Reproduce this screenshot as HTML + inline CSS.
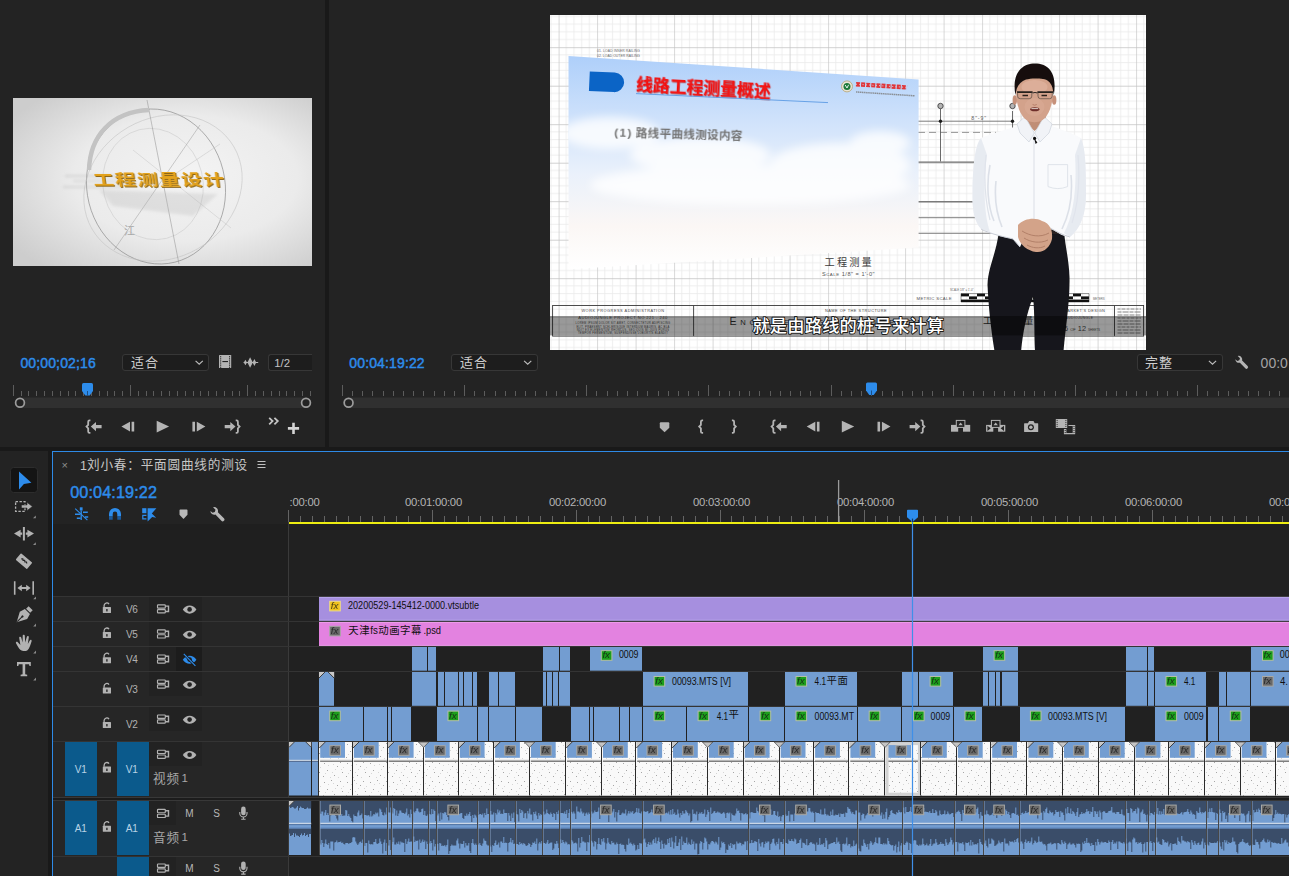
<!DOCTYPE html>
<html lang="zh"><head><meta charset="utf-8"><title>Adobe Premiere Pro</title>
<style>
html,body{margin:0;padding:0;background:#232323}
body{width:1289px;height:876px;overflow:hidden;position:relative;font-family:"Liberation Sans",sans-serif;}
.a{position:absolute;display:block}
.t{white-space:nowrap;line-height:1}
svg{overflow:visible}
</style></head><body>
<div class="a" style="left:325px;top:0px;width:4px;height:447px;background:#191919;"></div>
<div class="a" style="left:0px;top:447px;width:1289px;height:4px;background:#191919;"></div>
<div class="a" style="left:48px;top:451px;width:4px;height:425px;background:#191919;"></div>
<div class="a" style="left:52px;top:451px;width:1237px;height:1px;background:#2e8ae6;"></div>
<div class="a" style="left:52px;top:451px;width:1px;height:425px;background:#2e8ae6;"></div>
<svg class="a" style="left:13px;top:98px" width="299" height="168" viewBox="0 0 299 168" role="img" aria-label="source preview"><defs><radialGradient id="pvg" cx="0.56" cy="0.5" r="0.68" fx="0.6" fy="0.45"><stop offset="0" stop-color="#f3f3f3"/><stop offset="0.55" stop-color="#ebebeb"/><stop offset="1" stop-color="#cdcdcd"/></radialGradient><filter id="bl1"><feGaussianBlur stdDeviation="0.6"/></filter><filter id="bl2"><feGaussianBlur stdDeviation="1.6"/></filter></defs><rect width="299" height="168" fill="url(#pvg)"/><g fill="none" stroke="#8a8a8a" stroke-width="0.5" filter="url(#bl1)"><ellipse cx="143" cy="88.5" rx="69" ry="78" transform="rotate(-14 143 88.5)" stroke="#858585" stroke-width="0.6"/><ellipse cx="150" cy="90" rx="82" ry="70" transform="rotate(-30 150 90)" stroke="#c0c0c0"/><ellipse cx="140" cy="86" rx="50" ry="56" transform="rotate(-14 140 86)" stroke="#c8c8c8"/><path d="M134 2 L166 166" stroke="#8c8c8c"/><path d="M187 27 L101 152" stroke="#9a9a9a"/><path d="M120 52 L218 130" stroke="#c4c4c4"/><path d="M207 46 L150 84" stroke="#c0c0c0"/></g><path d="M76 72 C 77 38, 98 14, 136 12" fill="none" stroke="#c3c3c3" stroke-width="4.5" filter="url(#bl1)"/><g filter="url(#bl2)" opacity="0.28"><rect x="52" y="77" width="60" height="2" fill="#9a9a9a"/><rect x="60" y="82" width="50" height="2" fill="#a8a8a8"/><rect x="50" y="88" width="60" height="2" fill="#a0a0a0"/><path d="M86 92 L205 96 L180 118 L100 108 Z" fill="#b4b4b4"/></g><g transform="translate(80 75) skewX(8) scale(1 0.72)" fill="#8a6414" filter="url(#bl1)"><text x="0" y="18.5" font-family="'Liberation Sans','Noto Sans CJK SC',sans-serif" font-size="21" font-weight="bold" letter-spacing="1">工程测量设计</text></g><g transform="translate(79 74) skewX(8) scale(1 0.72)" fill="#e3a21d" filter="url(#bl1)"><text x="0" y="18.5" font-family="'Liberation Sans','Noto Sans CJK SC',sans-serif" font-size="21" font-weight="bold" letter-spacing="1">工程测量设计</text></g><text x="111" y="136.7" font-family="'Liberation Sans','Noto Sans CJK SC',sans-serif" font-size="11" fill="#a8a8a8">江</text></svg>
<div class="a" style="left:122px;top:354px;width:85px;height:15px;background:#1d1d1d;border:1px solid #373737;border-radius:3px"></div>
<div class="a" style="left:450.6px;top:354px;width:85px;height:15px;background:#1d1d1d;border:1px solid #373737;border-radius:3px"></div>
<div class="a" style="left:1136.5px;top:354px;width:84px;height:15px;background:#1d1d1d;border:1px solid #373737;border-radius:3px"></div>
<div class="a" style="left:267.5px;top:354px;width:50px;height:15px;background:#1d1d1d;border:1px solid #373737;border-radius:3px 0 0 3px;border-right:none;width:43.5px"></div>
<svg class="a" style="left:0px;top:0px" width="1289" height="876" viewBox="0 0 1289 876" role="img" aria-label="controls"><path d="M13.5 385 V396M21.5 391 V396M28.5 391 V396M36.5 391 V396M44.5 391 V396M52.5 391 V396M60.5 391 V396M68.5 391 V396M75.5 391 V396M83.5 391 V396M91.5 391 V396M99.5 391 V396M107.5 391 V396M114.5 391 V396M122.5 391 V396M130.5 385 V396M138.5 391 V396M146.5 391 V396M153.5 391 V396M161.5 391 V396M169.5 391 V396M177.5 391 V396M185.5 391 V396M193.5 391 V396M200.5 391 V396M208.5 391 V396M216.5 391 V396M224.5 391 V396M232.5 391 V396M239.5 391 V396M247.5 385 V396M255.5 391 V396M263.5 391 V396M271.5 391 V396M279.5 391 V396M286.5 391 V396M294.5 391 V396M302.5 391 V396M310.5 391 V396" stroke="#5c5c5c" stroke-width="1" fill="none"/><rect x="15" y="397.5" width="296" height="10.5" rx="5" fill="#303030"/><circle cx="20" cy="402.8" r="4.4" fill="#232323" stroke="#9c9c9c" stroke-width="1.7"/><circle cx="306" cy="402.8" r="4.4" fill="#232323" stroke="#9c9c9c" stroke-width="1.7"/><path d="M83.5 383 h8 a1.5 1.5 0 0 1 1.5 1.5 V391 L89.7 395.5 H85.3 L82 391 V384.5 a1.5 1.5 0 0 1 1.5 -1.5Z" fill="#2d8ceb"/><path d="M87.5 391 V396" stroke="#1b4f88" stroke-width="1"/><path d="M342.5 385 V396M352.5 391 V396M362.5 391 V396M372.5 391 V396M383.5 391 V396M393.5 391 V396M403.5 391 V396M413.5 391 V396M423.5 391 V396M434.5 391 V396M444.5 391 V396M454.5 391 V396M464.5 385 V396M474.5 391 V396M484.5 391 V396M495.5 391 V396M505.5 391 V396M515.5 391 V396M525.5 391 V396M535.5 391 V396M546.5 391 V396M556.5 391 V396M566.5 391 V396M576.5 391 V396M586.5 385 V396M596.5 391 V396M607.5 391 V396M617.5 391 V396M627.5 391 V396M637.5 391 V396M647.5 391 V396M658.5 391 V396M668.5 391 V396M678.5 391 V396M688.5 391 V396M698.5 391 V396M708.5 385 V396M719.5 391 V396M729.5 391 V396M739.5 391 V396M749.5 391 V396M759.5 391 V396M770.5 391 V396M780.5 391 V396M790.5 391 V396M800.5 391 V396M810.5 391 V396M820.5 391 V396M831.5 385 V396M841.5 391 V396M851.5 391 V396M861.5 391 V396M871.5 391 V396M882.5 391 V396M892.5 391 V396M902.5 391 V396M912.5 391 V396M922.5 391 V396M932.5 391 V396M943.5 391 V396M953.5 385 V396M963.5 391 V396M973.5 391 V396M983.5 391 V396M994.5 391 V396M1004.5 391 V396M1014.5 391 V396M1024.5 391 V396M1034.5 391 V396M1044.5 391 V396M1055.5 391 V396M1065.5 391 V396M1075.5 385 V396M1085.5 391 V396M1095.5 391 V396M1106.5 391 V396M1116.5 391 V396M1126.5 391 V396M1136.5 391 V396M1146.5 391 V396M1157.5 391 V396M1167.5 391 V396M1177.5 391 V396M1187.5 391 V396M1197.5 385 V396M1207.5 391 V396M1218.5 391 V396M1228.5 391 V396M1238.5 391 V396M1248.5 391 V396M1258.5 391 V396M1269.5 391 V396M1279.5 391 V396" stroke="#5c5c5c" stroke-width="1" fill="none"/><rect x="343" y="397.5" width="960" height="10.5" rx="5" fill="#303030"/><circle cx="348.6" cy="402.8" r="4.4" fill="#232323" stroke="#9c9c9c" stroke-width="1.7"/><path d="M867.5 382.5 h8 a1.5 1.5 0 0 1 1.5 1.5 V390.5 L873.7 395 H869.3 L866 390.5 V384 a1.5 1.5 0 0 1 1.5 -1.5Z" fill="#2d8ceb"/><path d="M871.5 390.5 V395.5" stroke="#1b4f88" stroke-width="1"/><path d="M90.4 420.4 h-.8 q-1.400 0 -1.400 1.400 v3 l-1.700 1.800 l1.700 1.800 v3 q0 1.400 1.400 1.400 h.8" fill="none" stroke="#b4b4b4" stroke-width="1.800" stroke-linejoin="miter"/><path d="M90.8 426.6 l5.2 -4.6 v3 h5.6 v3.2 h-5.6 v3z" fill="#b4b4b4"/><path d="M121.4 426.6 l8.6 -4.9 v9.8z M131.6 421.7 h2.6 v9.8 h-2.6z" fill="#b4b4b4"/><path d="M156.7 420.8 l12.4 5.8 l-12.4 5.8z" fill="#b4b4b4"/><path d="M205.4 426.6 l-8.6 -4.9 v9.8z M192.4 421.7 h2.6 v9.8 h-2.6z" fill="#b4b4b4"/><path d="M235.7 420.4 h.8 q1.400 0 1.400 1.400 v3 l1.700 1.800 l-1.700 1.800 v3 q0 1.400 -1.400 1.400 h-.8" fill="none" stroke="#b4b4b4" stroke-width="1.800" stroke-linejoin="miter"/><path d="M235.5 426.6 l-5.2 -4.6 v3 h-5.6 v3.2 h5.6 v3z" fill="#b4b4b4"/><path d="M269.2 417.8 l3.4 3.3 l-3.4 3.3 M274.4 417.8 l3.4 3.3 l-3.4 3.3" fill="none" stroke="#c4c4c4" stroke-width="1.8"/><path d="M293.5 422.8 v11.2 M287.9 428.4 h11.2" stroke="#d4d4d4" stroke-width="2.6"/><path d="M660.8 422.2 h7.5 a1 1 0 0 1 1 1 v4.6 l-4.75 4.4 l-4.75 -4.4 v-4.6 a1 1 0 0 1 1 -1z" fill="#b4b4b4"/><path d="M703.1 420.4 h-.8 q-1.400 0 -1.400 1.400 v3 l-1.700 1.800 l1.700 1.800 v3 q0 1.400 1.400 1.400 h.8" fill="none" stroke="#b4b4b4" stroke-width="1.800" stroke-linejoin="miter"/><path d="M731.9 420.4 h.8 q1.400 0 1.400 1.400 v3 l1.700 1.800 l-1.700 1.800 v3 q0 1.400 -1.400 1.400 h-.8" fill="none" stroke="#b4b4b4" stroke-width="1.800" stroke-linejoin="miter"/><path d="M775.5 420.4 h-.8 q-1.400 0 -1.400 1.400 v3 l-1.700 1.800 l1.700 1.800 v3 q0 1.400 1.400 1.400 h.8" fill="none" stroke="#b4b4b4" stroke-width="1.800" stroke-linejoin="miter"/><path d="M775.9 426.6 l5.2 -4.6 v3 h5.6 v3.2 h-5.6 v3z" fill="#b4b4b4"/><path d="M806.7 426.6 l8.6 -4.9 v9.8z M816.9 421.7 h2.6 v9.8 h-2.6z" fill="#b4b4b4"/><path d="M841.8 420.8 l12.4 5.8 l-12.4 5.8z" fill="#b4b4b4"/><path d="M890.5 426.6 l-8.6 -4.9 v9.8z M877.5 421.7 h2.6 v9.8 h-2.6z" fill="#b4b4b4"/><path d="M920.6 420.4 h.8 q1.400 0 1.400 1.400 v3 l1.700 1.800 l-1.700 1.800 v3 q0 1.400 -1.400 1.400 h-.8" fill="none" stroke="#b4b4b4" stroke-width="1.800" stroke-linejoin="miter"/><path d="M920.4 426.6 l-5.2 -4.6 v3 h-5.6 v3.2 h5.6 v3z" fill="#b4b4b4"/><rect x="951" y="424.9" width="7.2" height="6.8" fill="#b4b4b4"/><rect x="963" y="424.9" width="7.2" height="6.8" fill="#b4b4b4"/><rect x="956.3" y="420.4" width="8.6" height="7" fill="#232323" stroke="#b4b4b4" stroke-width="1"/><path d="M958.4 425.2 l2.200 -2.700 l2.200 2.700z" fill="#b4b4b4"/><rect x="986.1" y="424.9" width="7.2" height="6.8" fill="#b4b4b4"/><rect x="998.1" y="424.9" width="7.2" height="6.8" fill="#b4b4b4"/><rect x="991.4" y="420.4" width="8.6" height="7" fill="#232323" stroke="#b4b4b4" stroke-width="1"/><path d="M993.5 425.2 l2.200 -2.700 l2.200 2.700z" fill="#b4b4b4"/><path d="M987.4 425.700 l3.400 2.600 l-3.400 2.600z M1004 425.700 l-3.400 2.600 l3.400 2.600z" fill="#232323"/><path d="M1024.600 423.300 h3.300 l1.200 -2.200 h4.400 l1.200 2.200 h3 a.5 .5 0 0 1 .5 .5 v7.600 a.5 .5 0 0 1 -.5 .5 h-13.100 a.5 .5 0 0 1 -.5 -.5 v-7.600 a.5 .5 0 0 1 .5 -.5z" fill="#b4b4b4"/><circle cx="1030.900" cy="427.200" r="3" fill="#232323"/><circle cx="1030.900" cy="427.200" r="1.700" fill="#b4b4b4"/><rect x="1055.800" y="419" width="11.400" height="9" rx="0.500" fill="#b4b4b4"/><g fill="#232323"><rect x="1056.600" y="419.9" width="1" height="1"/><rect x="1065.400" y="419.9" width="1" height="1"/><rect x="1056.600" y="421.9" width="1" height="1"/><rect x="1065.400" y="421.9" width="1" height="1"/><rect x="1056.600" y="423.9" width="1" height="1"/><rect x="1065.400" y="423.9" width="1" height="1"/><rect x="1056.600" y="425.9" width="1" height="1"/><rect x="1065.400" y="425.9" width="1" height="1"/></g><path d="M1068.400 425.500 h6.100 v8.100 h-10 v-4.600" fill="none" stroke="#b4b4b4" stroke-width="1.200"/><path d="M1064 429 h2.400 v5.100 h-2.400z M1072.700 425 h2.400 v9.100 h-2.400z" fill="#b4b4b4"/><g fill="#232323"><rect x="1064.700" y="430" width="1" height="1"/><rect x="1073.500" y="426" width="1" height="1"/><rect x="1064.700" y="432" width="1" height="1"/><rect x="1073.500" y="428" width="1" height="1"/><rect x="1073.500" y="430" width="1" height="1"/><rect x="1073.500" y="432" width="1" height="1"/></g><g transform="translate(1241.5 362.5) scale(1)"><path d="M-6.2 -3.2 a3.6 3.6 0 0 0 4.6 3.4 l5.4 5.6 a1.6 1.6 0 0 0 2.3 -2.3 l-5.5 -5.5 a3.6 3.6 0 0 0 -4.4 -4.5 l2.3 2.3 l-0.7 2 l-2 0.7z" fill="#b4b4b4"/></g><rect x="219" y="355" width="12.2" height="13.1" rx="0.6" fill="#b4b4b4"/><g fill="#232323"><rect x="220.1" y="356.2" width="1.1" height="1.1"/><rect x="229" y="356.2" width="1.1" height="1.1"/><rect x="220.1" y="358.3" width="1.1" height="1.1"/><rect x="229" y="358.3" width="1.1" height="1.1"/><rect x="220.1" y="360.4" width="1.1" height="1.1"/><rect x="229" y="360.4" width="1.1" height="1.1"/><rect x="220.1" y="362.5" width="1.1" height="1.1"/><rect x="229" y="362.5" width="1.1" height="1.1"/><rect x="220.1" y="364.6" width="1.1" height="1.1"/><rect x="229" y="364.6" width="1.1" height="1.1"/><rect x="220.1" y="366.7" width="1.1" height="1.1"/><rect x="229" y="366.7" width="1.1" height="1.1"/><rect x="222.4" y="361" width="5.6" height="1.1"/></g><path d="M243.6 362.5 H258.2" stroke="#b4b4b4" stroke-width="1"/><path d="M243.8 362.5 l1.600 -2.800 l1.600 2.800 l-1.600 2.800z M247.400 362.500 l2.700 -5.300 l2.700 5.300 l-2.700 5.300z M252.600 362.500 l1.800 -3.400 l1.800 3.400 l-1.800 3.400z" fill="#b4b4b4"/><path d="M195.6 360.8 l3.6 3.4 l3.6 -3.4" fill="none" stroke="#bcbcbc" stroke-width="1.15"/><path d="M524.1 360.8 l3.6 3.4 l3.6 -3.4" fill="none" stroke="#bcbcbc" stroke-width="1.15"/><path d="M1208.9 360.8 l3.6 3.4 l3.6 -3.4" fill="none" stroke="#bcbcbc" stroke-width="1.15"/></svg>
<div class="a t" style="left:274.2px;top:357.6px;font-size:11.4px;color:#c2c2c2;">1/2</div>
<svg class="a" style="left:128.5px;top:354.3px" width="32" height="20" viewBox="0 0 32 20" role="img" aria-label="适合"><text x="2" y="13.4" font-family="'Liberation Sans','Noto Sans CJK SC',sans-serif" font-size="13" letter-spacing="1" fill="#cfcfcf">适合</text></svg>
<svg class="a" style="left:457.6px;top:354.3px" width="32" height="20" viewBox="0 0 32 20" role="img" aria-label="适合"><text x="2" y="13.4" font-family="'Liberation Sans','Noto Sans CJK SC',sans-serif" font-size="13" letter-spacing="1" fill="#cfcfcf">适合</text></svg>
<svg class="a" style="left:1142.8px;top:354.3px" width="32" height="20" viewBox="0 0 32 20" role="img" aria-label="完整"><text x="2" y="13.4" font-family="'Liberation Sans','Noto Sans CJK SC',sans-serif" font-size="13" letter-spacing="1" fill="#cfcfcf">完整</text></svg>
<div class="a t" style="left:20.4px;top:356px;font-size:14px;color:#2d8ceb;letter-spacing:0.14px;-webkit-text-stroke:0.45px #2d8ceb">00;00;02;16</div>
<div class="a t" style="left:349.3px;top:356px;font-size:14px;color:#2d8ceb;letter-spacing:0.14px;-webkit-text-stroke:0.45px #2d8ceb">00:04:19:22</div>
<div class="a t" style="left:1260.6px;top:356px;font-size:14px;color:#a4a4a4;">00:0</div>
<svg class="a" style="left:550px;top:15px" width="596" height="335" viewBox="0 0 596 335" role="img" aria-label="program video frame"><defs>
<pattern id="grid" x="8.6" y="-6.3" width="38.5" height="38.5" patternUnits="userSpaceOnUse">
<path d="M7.7 0V38.5M15.4 0V38.5M23.1 0V38.5M30.8 0V38.5M0 7.7H38.5M0 15.4H38.5M0 23.1H38.5M0 30.8H38.5" stroke="#eaeaea" stroke-width="0.8" fill="none"/>
<path d="M0 0V38.5M0 0H38.5" stroke="#c2c2c2" stroke-width="1.25" fill="none"/>
</pattern>
<linearGradient id="sky" x1="0" y1="0" x2="0" y2="1"><stop offset="0" stop-color="#aecffa"/><stop offset="0.3" stop-color="#cfe2fb"/><stop offset="0.55" stop-color="#eaf1fb"/><stop offset="0.8" stop-color="#fbf7f5"/><stop offset="1" stop-color="#ffffff"/></linearGradient>
<filter id="vb1"><feGaussianBlur stdDeviation="0.5"/></filter>
<filter id="vb4"><feGaussianBlur stdDeviation="5"/></filter>
<clipPath id="slideclip"><path d="M18.5 40.9 L368.6 64.5 L368.6 232.5 L18.5 254.3Z"/></clipPath>
<clipPath id="vclip"><rect width="596" height="335"/></clipPath>
</defs><g clip-path="url(#vclip)"><rect width="596" height="335" fill="#fff"/><rect width="596" height="335" fill="url(#grid)"/><g font-family="Liberation Sans" font-size="3.4" fill="#666"><text x="47" y="37.4" textLength="43">01. LOAD INNER RAILING</text><text x="47" y="42.2" textLength="43">02. LOAD OUTER RAILING</text></g><g stroke="#6e6e6e" fill="none" stroke-width="0.9"><path d="M368 106.200H463"/><path d="M368 117.400H446" stroke-dasharray="7 4" stroke="#8a8a8a"/><path d="M390.500 93.500V146.500M462.500 96V120" stroke="#5a5a5a"/><path d="M368 147.200H432" stroke-width="1.200"/><path d="M368 186.800H428" stroke-width="1.400" stroke="#7a7a7a"/><path d="M368 202.700H530" stroke="#707070"/><path d="M368 218.300H444" stroke="#707070"/><path d="M524 198 v6 h4" stroke="#444"/><circle cx="390.500" cy="91" r="2.700" stroke="#444" fill="#b4b4b4"/><circle cx="462.500" cy="91" r="2.700" stroke="#444" fill="#b4b4b4"/></g><circle cx="390.500" cy="106.200" r="1.700" fill="#1c1c1c"/><circle cx="462.500" cy="106.200" r="1.700" fill="#1c1c1c"/><text x="429.200" y="104.600" font-family="Liberation Sans" font-size="5.200" fill="#606060" text-anchor="middle" letter-spacing="0.900">8"-9"</text><path d="M18.5 40.9 L368.6 64.5 L368.6 232.5 L18.5 254.3Z" fill="url(#sky)"/><g clip-path="url(#slideclip)" filter="url(#vb4)" fill="#fff" opacity="0.8"><ellipse cx="60" cy="118" rx="50" ry="16"/><ellipse cx="150" cy="140" rx="70" ry="18"/><ellipse cx="290" cy="150" rx="70" ry="22"/><ellipse cx="330" cy="128" rx="30" ry="12"/><ellipse cx="200" cy="170" rx="160" ry="20"/></g><path d="M0 0 H25 a9.8 9.8 0 0 1 0 19.6 H0Z" transform="translate(39.8 56.4) rotate(2.6)" fill="#0b64c6"/><g transform="translate(86.6 60.4) rotate(3.1)" filter="url(#vb1)"><g transform="translate(0.7 0.9)" fill="#8e1010" opacity="0.5"><text x="0" y="14.9" font-family="'Liberation Sans','Noto Sans CJK SC',sans-serif" font-size="16.9" font-weight="bold" letter-spacing="-0.05">线路工程测量概述</text></g><g fill="#f31212" stroke="#f31212" stroke-width="0.2"><text x="0" y="14.9" font-family="'Liberation Sans','Noto Sans CJK SC',sans-serif" font-size="16.9" font-weight="bold" letter-spacing="-0.05">线路工程测量概述</text></g></g><path d="M86 78.6 L278 87.6" stroke="#5c9be3" stroke-width="0.9"/><g transform="translate(64.5 111.5) rotate(1.6)" fill="#737373" filter="url(#vb1)"><text x="0" y="10.2" font-family="'Liberation Sans','Noto Sans CJK SC',sans-serif" font-size="11.6" font-weight="bold"><tspan x="0" textLength="17" lengthAdjust="spacing">(1)</tspan><tspan x="21.48" letter-spacing="0.3">路线平曲线测设内容</tspan></text></g><circle cx="297" cy="71.4" r="5.5" fill="#e9e5d6" stroke="#b9aa80" stroke-width="0.9"/><circle cx="297" cy="71.400" r="3.500" fill="#1d7a3a"/><path d="M295.200 70 l1.800 3 l1.600 -3.200" stroke="#fff" stroke-width="0.9" fill="none"/><path d="M306 69.200 L357 72.400" stroke="#e32424" stroke-width="4.400" fill="none" stroke-dasharray="4 1.100" opacity="0.9"/><path d="M306 69.200 L357 72.400" stroke="#cfe0f7" stroke-width="1" fill="none" stroke-dasharray="1 2.300" opacity="0.9"/><path d="M306 77 L365 80.800" stroke="#7d7d7d" stroke-width="1.500" stroke-dasharray="1.400 0.500" opacity="0.8"/><text x="274.6" y="251.2" font-family="'Liberation Sans','Noto Sans CJK SC',sans-serif" font-size="10.2" letter-spacing="2.1" fill="#3c3c3c">工程测量</text><text x="298.5" y="260.8" font-family="Liberation Sans" font-size="5.600" fill="#555" text-anchor="middle" letter-spacing="0.500">S<tspan font-size="4.400">CALE</tspan> 1/8" = 1'-0"</text><text x="366.5" y="284.6" font-family="Liberation Sans" font-size="4.3" fill="#555" letter-spacing="0.3">METRIC SCALE</text><text x="400" y="276.4" font-family="Liberation Sans" font-size="2.8" fill="#666">SCALE 1/8" = 1'-0"</text><g fill="#111"><rect x="411" y="278.6" width="8" height="2.8"/><rect x="419" y="281.4" width="8" height="2.8"/><rect x="427" y="278.6" width="8" height="2.8"/><rect x="435" y="281.4" width="8" height="2.8"/><rect x="443" y="278.6" width="8" height="2.8"/><rect x="451" y="281.4" width="8" height="2.8"/><rect x="459" y="278.6" width="8" height="2.8"/><rect x="467" y="281.4" width="8" height="2.8"/><rect x="475" y="278.6" width="8" height="2.8"/><rect x="483" y="281.4" width="8" height="2.8"/><rect x="491" y="278.6" width="8" height="2.8"/><rect x="499" y="281.4" width="8" height="2.8"/><rect x="507" y="278.6" width="8" height="2.8"/><rect x="515" y="281.4" width="8" height="2.8"/><rect x="523" y="278.6" width="8" height="2.8"/><rect x="531" y="281.4" width="8" height="2.8"/></g><path d="M411 278.6 H539 V287 H411Z" fill="none" stroke="#333" stroke-width="0.5"/><rect x="411" y="284.6" width="128" height="2.4" fill="#111"/><text x="543" y="284.6" font-family="Liberation Sans" font-size="2.8" fill="#666">METERS</text><g fill="none" stroke="#3a3a3a" stroke-width="0.9"><rect x="2.6" y="290.5" width="591" height="30.6"/><path d="M143.6 290.5V321.1M564.5 290.5V321.1"/></g><text x="73" y="297" font-family="Liberation Sans" fill="#4a4a4a" font-size="3.9" text-anchor="middle" letter-spacing="0.5">WORK PROGRESS ADMINISTRATION</text><text x="73" y="303.6" font-family="Liberation Sans" fill="#4a4a4a" font-size="4.1" text-anchor="middle" letter-spacing="0.45">AUDIOJUNGLE PROJECT NO 221 - 240</text><text x="73" y="309.4" font-family="Liberation Sans" fill="#4a4a4a" font-size="2.7" text-anchor="middle" letter-spacing="0.3">LOREM IPSUM DOLOR SIT AMET, CONSECTETUR ADIPISCING</text><text x="73" y="312.5" font-family="Liberation Sans" fill="#4a4a4a" font-size="2.7" text-anchor="middle" letter-spacing="0.3">ELIT. PRAESENT SCELERISQUE INTERDUM MAURIS, AC BLA</text><text x="73" y="315.6" font-family="Liberation Sans" fill="#4a4a4a" font-size="2.7" text-anchor="middle" letter-spacing="0.3">NDIT EX ELEMENTUM RHONCUS. SED QUIS MI QUIS PURUS</text><text x="73" y="318.7" font-family="Liberation Sans" fill="#4a4a4a" font-size="2.7" text-anchor="middle" letter-spacing="0.3">TEMPOR FERMENTUM. SUSPENDISSE LOBORTIS BLANDIT</text><text x="306" y="297" font-family="Liberation Sans" fill="#4a4a4a" font-size="3.9" text-anchor="middle" letter-spacing="0.5">NAME OF THE STRUCTURE</text><text x="179.5" y="309.6" font-family="Liberation Sans" fill="#333" font-size="10.6" letter-spacing="3.6">E<tspan font-size="7.6" letter-spacing="3.9">NGINEERING MEASUREMENT</tspan></text><text x="433" y="309.05" font-family="'Liberation Sans','Noto Sans CJK SC',sans-serif" font-size="9.6" letter-spacing="3.9" fill="#333">工程测量</text><text x="534.5" y="297" font-family="Liberation Sans" fill="#4a4a4a" font-size="3.9" text-anchor="middle" letter-spacing="0.4">MARKET'S DESIGN</text><text x="529.5" y="303.6" font-family="Liberation Sans" fill="#4a4a4a" font-size="3.3" text-anchor="middle" letter-spacing="0.4">AUDIOJUNGLE</text><text x="514" y="315.6" font-family="Liberation Sans" fill="#4a4a4a" font-size="7.4">6 <tspan font-size="4">OF</tspan> 12 <tspan font-size="3">SHEETS</tspan></text><path d="M567.5 294 H591" stroke="#777" stroke-width="0.9" stroke-dasharray="3 1 4 1"/><path d="M567.5 297 H591" stroke="#777" stroke-width="0.9" stroke-dasharray="4 1 6 1"/><path d="M567.5 300 H591" stroke="#777" stroke-width="0.9" stroke-dasharray="5 1 5 1"/><path d="M567.5 303 H591" stroke="#777" stroke-width="0.9" stroke-dasharray="3 1 4 1"/><path d="M567.5 306 H591" stroke="#777" stroke-width="0.9" stroke-dasharray="4 1 6 1"/><path d="M567.5 309 H591" stroke="#777" stroke-width="0.9" stroke-dasharray="5 1 5 1"/><path d="M567.5 312 H591" stroke="#777" stroke-width="0.9" stroke-dasharray="3 1 4 1"/><path d="M567.5 315 H591" stroke="#777" stroke-width="0.9" stroke-dasharray="4 1 6 1"/><path d="M567.5 318 H591" stroke="#777" stroke-width="0.9" stroke-dasharray="5 1 5 1"/><g filter="url(#vb1)"><path d="M449 216 C446 240 438 252 437.5 270 C439 300 442 320 444.5 336 L471 336 C473 318 476 300 483 282 C485 300 484 320 485 336 L513.5 336 C516 310 520 285 519.5 262 C519 245 515 230 514 216Z" fill="#15161a"/><path d="M449 214.5 H515 V219 H449Z" fill="#2a2422"/><path d="M473 109 C462 113 444 118 431 123 C425 130 423 150 422.5 175 C422 195 424 206 431 214 C440 220 455 222 463 224 L470 232 C475 222 480 214 486 212 L500 213 C508 218 514 222 520 222 C530 214 536 200 536 180 C536 155 536 135 531 123 C520 117 506 113 497 109 L485 118Z" fill="#f9fafc"/><path d="M431 214 C440 219 455 222 463 224 L470 232 M520 222 C512 220 506 216 500 213" fill="none" stroke="#c9cdd6" stroke-width="1"/><path d="M436 140 C434 160 435 185 440 205 M528 140 C530 165 528 190 522 208 M484 120 V212" fill="none" stroke="#dfe3ea" stroke-width="1.2"/><path d="M468 210 C474 203 486 202 492 206 C500 208 503 216 502 224 C500 232 494 238 486 237 C478 236 470 230 468 222Z" fill="#d3a389"/><path d="M472 216 C480 221 490 223 499 218 M474 223 C480 227 490 229 498 225 M477 230 C482 233 490 234 495 231" stroke="#ae7c64" stroke-width="0.9" fill="none"/><path d="M431 123 C425 130 423 150 422.500 175 C422 195 424 206 431 214 L440 217 C434 200 433 170 437 140Z M531 123 C536 135 536 155 536 180 C536 200 530 214 520 222 L514 218 C524 200 527 170 525 140Z" fill="#dfe4ec" opacity="0.7"/><path d="M498 149.600 h19.600 v22 q-9.800 4 -19.600 0z" fill="none" stroke="#dde1e8" stroke-width="0.9"/><path d="M446 166 C444 185 447 200 452 212 M521 160 C523 182 519 200 512 214 M440 150 C436 170 438 192 444 206" fill="none" stroke="#d4d9e2" stroke-width="1.600" opacity="0.8"/><path d="M474 96 H496 V106 L484.500 116 L474 106Z" fill="#c08e76"/><path d="M467 109 L475 101.500 L484.300 118 L479 127 L470 118Z M502 109 L494 101.500 L484.700 118 L490 127 L499 118Z" fill="#f1f3f7" stroke="#cfd4dc" stroke-width="0.7"/><ellipse cx="464.800" cy="85" rx="2.200" ry="4.800" fill="#c6917a"/><ellipse cx="504.200" cy="85" rx="2.200" ry="4.800" fill="#c6917a"/><path d="M466 76 C466 60 474 51 484.500 51 C495 51 503 60 503 76 C503 90 498.500 101 492.500 105 C488 108 481 108 476.500 105 C470.500 101 466 90 466 76Z" fill="#d3a28b"/><ellipse cx="484.500" cy="72" rx="13" ry="7" fill="#deb29c" opacity="0.8"/><ellipse cx="484.500" cy="92" rx="10" ry="9" fill="#d9aa94" opacity="0.7"/><path d="M465.400 80 C461.500 58 472 48.400 485 48.400 C498.500 48.400 507.500 58 503.800 80 L502.400 72.500 C500.500 67 497.500 64.600 493 64 C488 63.200 480 63.200 476 64.600 C471.500 66.200 468.600 69.500 466.800 73.500Z" fill="#15110e"/><g fill="none" stroke="#27211d"><path d="M467 77.200 H482.600 M487.400 77.200 H503" stroke-width="1.700"/><path d="M467.600 77.500 v3.600 q0 2.600 2.600 2.600 h9 q2.600 0 2.600 -2.600 v-3.600 M488 77.500 v3.600 q0 2.600 2.600 2.600 h9 q2.600 0 2.600 -2.600 v-3.600" stroke-width="0.7" stroke="#5a4c44"/><path d="M482.600 78 q2.400 -1 4.800 0" stroke-width="1"/></g><path d="M472.500 80.500 h5.500 M491.500 80.500 h5.500" stroke="#2c211c" stroke-width="1.400"/><path d="M482.600 89.500 q2 1.400 4.200 0" stroke="#b37a64" stroke-width="0.9" fill="none"/><ellipse cx="484.800" cy="94.200" rx="4.600" ry="2" fill="#6e2f2b"/><path d="M481.400 93.600 h6.800" stroke="#e8dcd6" stroke-width="0.9"/><path d="M484 123 l1.600 6 l1.800 -1.400z" fill="#111"/><circle cx="484.600" cy="123.400" r="1.600" fill="#111"/></g><rect x="0" y="301" width="596" height="19.4" fill="#000" opacity="0.4"/><g transform="translate(202.4 301.6)"><g fill="#000" stroke="#111" stroke-width="2.06" stroke-linejoin="round" opacity="0.9"><text x="0" y="15.1" font-family="'Liberation Sans','Noto Sans CJK SC',sans-serif" font-size="17.2" font-weight="500" letter-spacing="0.25">就是由路线的桩号来计算</text></g><g fill="#fff"><text x="0" y="15.1" font-family="'Liberation Sans','Noto Sans CJK SC',sans-serif" font-size="17.2" font-weight="500" letter-spacing="0.25">就是由路线的桩号来计算</text></g></g></g></svg>
<div class="a" style="left:53px;top:452px;width:1236px;height:72px;background:#232323;"></div>
<div class="a" style="left:53px;top:524px;width:236px;height:72px;background:#1f1f1f;"></div>
<div class="a" style="left:289px;top:524px;width:1000px;height:352px;background:#212121;"></div>
<div class="a" style="left:53px;top:596px;width:236px;height:280px;background:#262626;"></div>
<div class="a" style="left:288px;top:510px;width:1px;height:366px;background:#3a3a3a;"></div>
<div class="a" style="left:149px;top:597px;width:53px;height:24px;background:#222222;"></div>
<div class="a" style="left:149px;top:622px;width:53px;height:24px;background:#222222;"></div>
<div class="a" style="left:149px;top:647px;width:53px;height:24px;background:#222222;"></div>
<div class="a" style="left:149px;top:672px;width:53px;height:24px;background:#222222;"></div>
<div class="a" style="left:149px;top:707px;width:53px;height:24px;background:#222222;"></div>
<div class="a" style="left:149px;top:742px;width:53px;height:24px;background:#222222;"></div>
<div class="a" style="left:175.5px;top:647px;width:26.5px;height:24px;background:#1c1c1c;"></div>
<div class="a" style="left:149px;top:801px;width:26.5px;height:24px;background:#222222;"></div>
<div class="a" style="left:149px;top:857px;width:26.5px;height:19px;background:#222222;"></div>
<div class="a" style="left:53px;top:596px;width:1236px;height:1px;background:#343434;"></div>
<div class="a" style="left:53px;top:621px;width:1236px;height:1px;background:#343434;"></div>
<div class="a" style="left:53px;top:646px;width:1236px;height:1px;background:#343434;"></div>
<div class="a" style="left:53px;top:671px;width:1236px;height:1px;background:#343434;"></div>
<div class="a" style="left:53px;top:706px;width:1236px;height:1px;background:#343434;"></div>
<div class="a" style="left:53px;top:741px;width:1236px;height:1px;background:#343434;"></div>
<div class="a" style="left:53px;top:856px;width:1236px;height:1px;background:#343434;"></div>
<div class="a" style="left:53px;top:797px;width:1236px;height:3px;background:#1c1c1c;"></div>
<div class="a" style="left:53px;top:796.5px;width:1236px;height:1px;background:#383838;"></div>
<div class="a" style="left:53px;top:799.5px;width:1236px;height:1px;background:#383838;"></div>
<div class="a" style="left:65px;top:742px;width:32px;height:54px;background:#0b5a8c;"></div>
<div class="a" style="left:117px;top:742px;width:32px;height:54px;background:#0b5a8c;"></div>
<div class="a" style="left:65px;top:801px;width:32px;height:54px;background:#0b5a8c;"></div>
<div class="a" style="left:117px;top:801px;width:32px;height:54px;background:#0b5a8c;"></div>
<div class="a" style="left:117px;top:857px;width:32px;height:19px;background:#0b5a8c;"></div>
<div class="a t" style="left:70.6px;top:765.1px;font-size:10px;color:#b9d3e6;width:20px;text-align:center;letter-spacing:-0.3px">V1</div>
<div class="a t" style="left:121.6px;top:765.1px;font-size:10px;color:#b9d3e6;width:20px;text-align:center;letter-spacing:-0.3px">V1</div>
<div class="a t" style="left:70.6px;top:824.1px;font-size:10px;color:#b9d3e6;width:20px;text-align:center;letter-spacing:-0.3px">A1</div>
<div class="a t" style="left:121.6px;top:824.1px;font-size:10px;color:#b9d3e6;width:20px;text-align:center;letter-spacing:-0.3px">A1</div>
<div class="a t" style="left:126px;top:604.8px;font-size:10px;color:#b2b2b2;letter-spacing:-0.3px">V6</div>
<div class="a t" style="left:126px;top:629.8px;font-size:10px;color:#b2b2b2;letter-spacing:-0.3px">V5</div>
<div class="a t" style="left:126px;top:654.8px;font-size:10px;color:#b2b2b2;letter-spacing:-0.3px">V4</div>
<div class="a t" style="left:126px;top:684.8px;font-size:10px;color:#b2b2b2;letter-spacing:-0.3px">V3</div>
<div class="a t" style="left:126px;top:719.8px;font-size:10px;color:#b2b2b2;letter-spacing:-0.3px">V2</div>
<div class="a t" style="left:183px;top:809px;font-size:10px;color:#b8b8b8;width:13px;text-align:center">M</div>
<div class="a t" style="left:210px;top:809px;font-size:10px;color:#b8b8b8;width:13px;text-align:center">S</div>
<div class="a t" style="left:183px;top:864px;font-size:10px;color:#b8b8b8;width:13px;text-align:center">M</div>
<div class="a t" style="left:210px;top:864px;font-size:10px;color:#b8b8b8;width:13px;text-align:center">S</div>
<svg class="a" style="left:150.6px;top:769.6px" width="31" height="20" viewBox="0 0 31 20" role="img" aria-label="视频"><text x="2" y="13.1" font-family="'Liberation Sans','Noto Sans CJK SC',sans-serif" font-size="12.6" letter-spacing="0.8" fill="#a8a8a8">视频</text></svg>
<div class="a t" style="left:181.6px;top:773.4px;font-size:11.5px;color:#a8a8a8;">1</div>
<svg class="a" style="left:150.6px;top:828.6px" width="31" height="20" viewBox="0 0 31 20" role="img" aria-label="音频"><text x="2" y="13.1" font-family="'Liberation Sans','Noto Sans CJK SC',sans-serif" font-size="12.6" letter-spacing="0.8" fill="#a8a8a8">音频</text></svg>
<div class="a t" style="left:181.6px;top:832.4px;font-size:11.5px;color:#a8a8a8;">1</div>
<div class="a t" style="left:61.5px;top:460px;font-size:11px;color:#8e8e8e;">×</div>
<div class="a t" style="left:80px;top:459.6px;font-size:12.5px;color:#c6c6c6;">1</div>
<svg class="a" style="left:84.6px;top:456.2px" width="166" height="20" viewBox="0 0 166 20" role="img" aria-label="1刘小春：平面圆曲线的测设"><text x="2" y="13.1" font-family="'Liberation Sans','Noto Sans CJK SC',sans-serif" font-size="12.6" letter-spacing="0.82" fill="#c6c6c6">刘小春：平面圆曲线的测设</text></svg>
<div class="a t" style="left:70.2px;top:483.8px;font-size:16.2px;color:#2d8ceb;letter-spacing:0.12px;-webkit-text-stroke:0.45px #2d8ceb">00:04:19:22</div>
<div class="a t" style="left:289.6px;top:497.3px;font-size:11.3px;color:#b4b4b4;letter-spacing:-0.25px">:00:00</div>
<div class="a t" style="left:405px;top:497.3px;font-size:11.3px;color:#b4b4b4;letter-spacing:-0.25px">00:01:00:00</div>
<div class="a t" style="left:549px;top:497.3px;font-size:11.3px;color:#b4b4b4;letter-spacing:-0.25px">00:02:00:00</div>
<div class="a t" style="left:693px;top:497.3px;font-size:11.3px;color:#b4b4b4;letter-spacing:-0.25px">00:03:00:00</div>
<div class="a t" style="left:837px;top:497.3px;font-size:11.3px;color:#b4b4b4;letter-spacing:-0.25px">00:04:00:00</div>
<div class="a t" style="left:981px;top:497.3px;font-size:11.3px;color:#b4b4b4;letter-spacing:-0.25px">00:05:00:00</div>
<div class="a t" style="left:1125px;top:497.3px;font-size:11.3px;color:#b4b4b4;letter-spacing:-0.25px">00:06:00:00</div>
<div class="a t" style="left:1269px;top:497.3px;font-size:11.3px;color:#b4b4b4;letter-spacing:-0.25px">00:07:00:00</div>
<svg class="a" style="left:0px;top:0px" width="1289" height="876" viewBox="0 0 1289 876" role="img" aria-label="timeline clips"><path d="M257.5 461.5h8M257.5 464.5h8M257.5 467.5h8" stroke="#c0c0c0" stroke-width="1.1"/><path d="M288.5 510V522M300.5 516V522M312.5 516V522M324.5 516V522M336.5 516V522M348.5 516V522M360.5 516V522M372.5 516V522M384.5 516V522M396.5 516V522M408.5 516V522M420.5 516V522M432.5 510V522M444.5 516V522M456.5 516V522M468.5 516V522M480.5 516V522M492.5 516V522M504.5 516V522M516.5 516V522M528.5 516V522M540.5 516V522M552.5 516V522M564.5 516V522M576.5 510V522M588.5 516V522M599.5 516V522M611.5 516V522M623.5 516V522M635.5 516V522M647.5 516V522M659.5 516V522M671.5 516V522M683.5 516V522M695.5 516V522M707.5 516V522M720.5 510V522M731.5 516V522M743.5 516V522M755.5 516V522M767.5 516V522M779.5 516V522M791.5 516V522M803.5 516V522M815.5 516V522M827.5 516V522M839.5 516V522M851.5 516V522M864.5 510V522M875.5 516V522M887.5 516V522M899.5 516V522M911.5 516V522M923.5 516V522M935.5 516V522M947.5 516V522M959.5 516V522M971.5 516V522M983.5 516V522M995.5 516V522M1008.5 510V522M1019.5 516V522M1031.5 516V522M1043.5 516V522M1055.5 516V522M1067.5 516V522M1079.5 516V522M1091.5 516V522M1103.5 516V522M1115.5 516V522M1127.5 516V522M1139.5 516V522M1152.5 510V522M1163.5 516V522M1175.5 516V522M1187.5 516V522M1198.5 516V522M1210.5 516V522M1222.5 516V522M1234.5 516V522M1246.5 516V522M1258.5 516V522M1270.5 516V522M1282.5 516V522" stroke="#646464" stroke-width="1" fill="none"/><rect x="289" y="522" width="1000" height="2" fill="#eded12"/><path d="M838.6 480V522" stroke="#9a9a9a" stroke-width="1.3"/><rect x="319.0" y="597.0" width="970.0" height="23.6" fill="#a68fdf"/><path d="M319 597.4H1289" stroke="#bfaef0" stroke-width="0.8"/><path d="M319 620.2H1289" stroke="#bfaef0" stroke-width="0.8"/><rect x="329.7" y="601.3" width="10.6" height="9.6" fill="#f0c21c" stroke="#ecd98e" stroke-width="1"/><text x="330.8" y="609.0" font-family="Liberation Sans" font-style="italic" font-size="9.6" fill="#151515" opacity="0.8" textLength="7.6" lengthAdjust="spacingAndGlyphs">fx</text><text x="348.0" y="609.4" font-family="Liberation Sans" font-size="10" fill="#101010" textLength="131" lengthAdjust="spacingAndGlyphs">20200529-145412-0000.vtsubtle</text><rect x="319.0" y="622.0" width="970.0" height="23.8" fill="#e382e0"/><path d="M319 622.4H1289" stroke="#f0a4ee" stroke-width="0.8"/><path d="M319 645.4H1289" stroke="#f0a4ee" stroke-width="0.8"/><rect x="329.7" y="626.3" width="10.6" height="9.6" fill="#686868" stroke="#a9a9a6" stroke-width="1"/><text x="330.8" y="634.0" font-family="Liberation Sans" font-style="italic" font-size="9.6" fill="#151515" opacity="0.8" textLength="7.6" lengthAdjust="spacingAndGlyphs">fx</text><text x="348.3" y="633.75" font-family="'Liberation Sans','Noto Sans CJK SC',sans-serif" font-size="10.4" letter-spacing="0.5" fill="#101010">天津</text><text x="370.3" y="634.4" font-family="Liberation Sans" font-size="10" fill="#101010" textLength="7.6" lengthAdjust="spacingAndGlyphs">fs</text><text x="378.3" y="633.75" font-family="'Liberation Sans','Noto Sans CJK SC',sans-serif" font-size="10.4" letter-spacing="0.5" fill="#101010">动画字幕</text><text x="423.4" y="634.4" font-family="Liberation Sans" font-size="10" fill="#101010" textLength="17.6" lengthAdjust="spacingAndGlyphs">.psd</text><rect x="412.0" y="647.0" width="15.0" height="23.7" fill="#739dd1"/><rect x="428.0" y="647.0" width="8.0" height="23.7" fill="#739dd1"/><rect x="543.0" y="647.0" width="16.0" height="23.7" fill="#739dd1"/><rect x="560.0" y="647.0" width="10.0" height="23.7" fill="#739dd1"/><rect x="590.0" y="647.0" width="52.0" height="23.7" fill="#739dd1"/><rect x="983.0" y="647.0" width="35.0" height="23.7" fill="#739dd1"/><rect x="1126.0" y="647.0" width="21.0" height="23.7" fill="#739dd1"/><rect x="1148.0" y="647.0" width="6.0" height="23.7" fill="#739dd1"/><rect x="1251.0" y="647.0" width="38.0" height="23.7" fill="#739dd1"/><rect x="319.0" y="672.0" width="15.0" height="33.8" fill="#739dd1"/><rect x="412.0" y="672.0" width="24.0" height="33.8" fill="#739dd1"/><rect x="438.0" y="672.0" width="6.0" height="33.8" fill="#739dd1"/><rect x="445.0" y="672.0" width="13.0" height="33.8" fill="#739dd1"/><rect x="459.0" y="672.0" width="4.0" height="33.8" fill="#739dd1"/><rect x="464.0" y="672.0" width="8.0" height="33.8" fill="#739dd1"/><rect x="473.0" y="672.0" width="4.0" height="33.8" fill="#739dd1"/><rect x="489.0" y="672.0" width="9.0" height="33.8" fill="#739dd1"/><rect x="499.0" y="672.0" width="16.0" height="33.8" fill="#739dd1"/><rect x="543.0" y="672.0" width="3.0" height="33.8" fill="#739dd1"/><rect x="547.0" y="672.0" width="5.0" height="33.8" fill="#739dd1"/><rect x="553.0" y="672.0" width="5.0" height="33.8" fill="#739dd1"/><rect x="559.0" y="672.0" width="11.0" height="33.8" fill="#739dd1"/><rect x="643.0" y="672.0" width="105.0" height="33.8" fill="#739dd1"/><rect x="785.0" y="672.0" width="72.0" height="33.8" fill="#739dd1"/><rect x="902.0" y="672.0" width="16.0" height="33.8" fill="#739dd1"/><rect x="919.0" y="672.0" width="34.0" height="33.8" fill="#739dd1"/><rect x="983.0" y="672.0" width="5.0" height="33.8" fill="#739dd1"/><rect x="989.0" y="672.0" width="6.0" height="33.8" fill="#739dd1"/><rect x="996.0" y="672.0" width="4.0" height="33.8" fill="#739dd1"/><rect x="1002.0" y="672.0" width="16.0" height="33.8" fill="#739dd1"/><rect x="1126.0" y="672.0" width="21.0" height="33.8" fill="#739dd1"/><rect x="1148.0" y="672.0" width="6.0" height="33.8" fill="#739dd1"/><rect x="1155.0" y="672.0" width="51.0" height="33.8" fill="#739dd1"/><rect x="1219.0" y="672.0" width="7.0" height="33.8" fill="#739dd1"/><rect x="1227.0" y="672.0" width="23.0" height="33.8" fill="#739dd1"/><rect x="1251.0" y="672.0" width="38.0" height="33.8" fill="#739dd1"/><rect x="319.0" y="707.0" width="44.0" height="34.0" fill="#739dd1"/><rect x="364.0" y="707.0" width="23.0" height="34.0" fill="#739dd1"/><rect x="388.0" y="707.0" width="3.0" height="34.0" fill="#739dd1"/><rect x="392.0" y="707.0" width="19.0" height="34.0" fill="#739dd1"/><rect x="437.0" y="707.0" width="40.0" height="34.0" fill="#739dd1"/><rect x="478.0" y="707.0" width="10.0" height="34.0" fill="#739dd1"/><rect x="489.0" y="707.0" width="26.0" height="34.0" fill="#739dd1"/><rect x="516.0" y="707.0" width="26.0" height="34.0" fill="#739dd1"/><rect x="571.0" y="707.0" width="18.0" height="34.0" fill="#739dd1"/><rect x="590.0" y="707.0" width="3.0" height="34.0" fill="#739dd1"/><rect x="594.0" y="707.0" width="20.0" height="34.0" fill="#739dd1"/><rect x="614.0" y="707.0" width="5.0" height="34.0" fill="#739dd1"/><rect x="620.0" y="707.0" width="9.0" height="34.0" fill="#739dd1"/><rect x="630.0" y="707.0" width="12.0" height="34.0" fill="#739dd1"/><rect x="643.0" y="707.0" width="43.0" height="34.0" fill="#739dd1"/><rect x="687.0" y="707.0" width="61.0" height="34.0" fill="#739dd1"/><rect x="749.0" y="707.0" width="35.0" height="34.0" fill="#739dd1"/><rect x="785.0" y="707.0" width="72.0" height="34.0" fill="#739dd1"/><rect x="858.0" y="707.0" width="43.0" height="34.0" fill="#739dd1"/><rect x="902.0" y="707.0" width="51.0" height="34.0" fill="#739dd1"/><rect x="954.0" y="707.0" width="28.0" height="34.0" fill="#739dd1"/><rect x="1020.0" y="707.0" width="105.0" height="34.0" fill="#739dd1"/><rect x="1155.0" y="707.0" width="51.0" height="34.0" fill="#739dd1"/><rect x="1208.0" y="707.0" width="10.0" height="34.0" fill="#739dd1"/><rect x="1219.0" y="707.0" width="31.0" height="34.0" fill="#739dd1"/><path d="M319 672 h6 l-6 6z M334.1 672 h-6 l6 6z" fill="#c4c4c4" stroke="#333" stroke-width="0.6"/><path d="M319 672 h6 l-6 6z M334.1 672 h-6 l6 6z" fill="#c9c9c9"/><path d="M325 672 l-6 6 M328.1 672 l6 6" stroke="#333" stroke-width="0.9"/><rect x="601.3" y="650.7" width="10.6" height="9.6" fill="#1c9e1c" stroke="#b4bfa6" stroke-width="1"/><text x="602.4" y="658.4" font-family="Liberation Sans" font-style="italic" font-size="9.6" fill="#151515" opacity="0.8" textLength="7.6" lengthAdjust="spacingAndGlyphs">fx</text><rect x="994.1" y="650.7" width="10.6" height="9.6" fill="#1c9e1c" stroke="#b4bfa6" stroke-width="1"/><text x="995.2" y="658.4" font-family="Liberation Sans" font-style="italic" font-size="9.6" fill="#151515" opacity="0.8" textLength="7.6" lengthAdjust="spacingAndGlyphs">fx</text><rect x="1262.5" y="650.7" width="10.6" height="9.6" fill="#1c9e1c" stroke="#b4bfa6" stroke-width="1"/><text x="1263.6" y="658.4" font-family="Liberation Sans" font-style="italic" font-size="9.6" fill="#151515" opacity="0.8" textLength="7.6" lengthAdjust="spacingAndGlyphs">fx</text><text x="618.9" y="658.4" font-family="Liberation Sans" font-size="10" fill="#101010" textLength="19.6" lengthAdjust="spacingAndGlyphs">0009</text><text x="1279.8" y="658.4" font-family="Liberation Sans" font-size="10" fill="#101010" textLength="10" lengthAdjust="spacingAndGlyphs">00</text><rect x="654.1" y="676.5" width="10.6" height="9.6" fill="#1c9e1c" stroke="#b4bfa6" stroke-width="1"/><text x="655.2" y="684.2" font-family="Liberation Sans" font-style="italic" font-size="9.6" fill="#151515" opacity="0.8" textLength="7.6" lengthAdjust="spacingAndGlyphs">fx</text><rect x="796.0" y="676.5" width="10.6" height="9.6" fill="#1c9e1c" stroke="#b4bfa6" stroke-width="1"/><text x="797.1" y="684.2" font-family="Liberation Sans" font-style="italic" font-size="9.6" fill="#151515" opacity="0.8" textLength="7.6" lengthAdjust="spacingAndGlyphs">fx</text><rect x="930.1" y="676.5" width="10.6" height="9.6" fill="#1c9e1c" stroke="#b4bfa6" stroke-width="1"/><text x="931.2" y="684.2" font-family="Liberation Sans" font-style="italic" font-size="9.6" fill="#151515" opacity="0.8" textLength="7.6" lengthAdjust="spacingAndGlyphs">fx</text><rect x="1166.0" y="676.5" width="10.6" height="9.6" fill="#1c9e1c" stroke="#b4bfa6" stroke-width="1"/><text x="1167.1" y="684.2" font-family="Liberation Sans" font-style="italic" font-size="9.6" fill="#151515" opacity="0.8" textLength="7.6" lengthAdjust="spacingAndGlyphs">fx</text><rect x="1262.5" y="676.5" width="10.6" height="9.6" fill="#686868" stroke="#a9a9a6" stroke-width="1"/><text x="1263.6" y="684.2" font-family="Liberation Sans" font-style="italic" font-size="9.6" fill="#151515" opacity="0.8" textLength="7.6" lengthAdjust="spacingAndGlyphs">fx</text><text x="672.0" y="685.0" font-family="Liberation Sans" font-size="10" fill="#101010" textLength="59" lengthAdjust="spacingAndGlyphs">00093.MTS [V]</text><text x="814.6" y="685.0" font-family="Liberation Sans" font-size="10" fill="#101010" textLength="11.4" lengthAdjust="spacingAndGlyphs">4.1</text><text x="1184.0" y="685.0" font-family="Liberation Sans" font-size="10" fill="#101010" textLength="11.4" lengthAdjust="spacingAndGlyphs">4.1</text><text x="1280.0" y="685.0" font-family="Liberation Sans" font-size="10" fill="#101010" textLength="8" lengthAdjust="spacingAndGlyphs">4.</text><text x="826.6" y="683.55" font-family="'Liberation Sans','Noto Sans CJK SC',sans-serif" font-size="10.4" letter-spacing="0.4" fill="#101010">平面</text><rect x="329.7" y="711.1" width="10.6" height="9.6" fill="#1c9e1c" stroke="#b4bfa6" stroke-width="1"/><text x="330.8" y="718.8" font-family="Liberation Sans" font-style="italic" font-size="9.6" fill="#151515" opacity="0.8" textLength="7.6" lengthAdjust="spacingAndGlyphs">fx</text><rect x="448.0" y="711.1" width="10.6" height="9.6" fill="#1c9e1c" stroke="#b4bfa6" stroke-width="1"/><text x="449.1" y="718.8" font-family="Liberation Sans" font-style="italic" font-size="9.6" fill="#151515" opacity="0.8" textLength="7.6" lengthAdjust="spacingAndGlyphs">fx</text><rect x="654.1" y="711.1" width="10.6" height="9.6" fill="#1c9e1c" stroke="#b4bfa6" stroke-width="1"/><text x="655.2" y="718.8" font-family="Liberation Sans" font-style="italic" font-size="9.6" fill="#151515" opacity="0.8" textLength="7.6" lengthAdjust="spacingAndGlyphs">fx</text><rect x="698.1" y="711.1" width="10.6" height="9.6" fill="#1c9e1c" stroke="#b4bfa6" stroke-width="1"/><text x="699.2" y="718.8" font-family="Liberation Sans" font-style="italic" font-size="9.6" fill="#151515" opacity="0.8" textLength="7.6" lengthAdjust="spacingAndGlyphs">fx</text><rect x="760.1" y="711.1" width="10.6" height="9.6" fill="#1c9e1c" stroke="#b4bfa6" stroke-width="1"/><text x="761.2" y="718.8" font-family="Liberation Sans" font-style="italic" font-size="9.6" fill="#151515" opacity="0.8" textLength="7.6" lengthAdjust="spacingAndGlyphs">fx</text><rect x="796.0" y="711.1" width="10.6" height="9.6" fill="#1c9e1c" stroke="#b4bfa6" stroke-width="1"/><text x="797.1" y="718.8" font-family="Liberation Sans" font-style="italic" font-size="9.6" fill="#151515" opacity="0.8" textLength="7.6" lengthAdjust="spacingAndGlyphs">fx</text><rect x="869.2" y="711.1" width="10.6" height="9.6" fill="#1c9e1c" stroke="#b4bfa6" stroke-width="1"/><text x="870.3" y="718.8" font-family="Liberation Sans" font-style="italic" font-size="9.6" fill="#151515" opacity="0.8" textLength="7.6" lengthAdjust="spacingAndGlyphs">fx</text><rect x="913.5" y="711.1" width="10.6" height="9.6" fill="#1c9e1c" stroke="#b4bfa6" stroke-width="1"/><text x="914.6" y="718.8" font-family="Liberation Sans" font-style="italic" font-size="9.6" fill="#151515" opacity="0.8" textLength="7.6" lengthAdjust="spacingAndGlyphs">fx</text><rect x="965.0" y="711.1" width="10.6" height="9.6" fill="#1c9e1c" stroke="#b4bfa6" stroke-width="1"/><text x="966.1" y="718.8" font-family="Liberation Sans" font-style="italic" font-size="9.6" fill="#151515" opacity="0.8" textLength="7.6" lengthAdjust="spacingAndGlyphs">fx</text><rect x="1030.4" y="711.1" width="10.6" height="9.6" fill="#1c9e1c" stroke="#b4bfa6" stroke-width="1"/><text x="1031.5" y="718.8" font-family="Liberation Sans" font-style="italic" font-size="9.6" fill="#151515" opacity="0.8" textLength="7.6" lengthAdjust="spacingAndGlyphs">fx</text><rect x="1166.0" y="711.1" width="10.6" height="9.6" fill="#1c9e1c" stroke="#b4bfa6" stroke-width="1"/><text x="1167.1" y="718.8" font-family="Liberation Sans" font-style="italic" font-size="9.6" fill="#151515" opacity="0.8" textLength="7.6" lengthAdjust="spacingAndGlyphs">fx</text><rect x="1230.3" y="711.1" width="10.6" height="9.6" fill="#1c9e1c" stroke="#b4bfa6" stroke-width="1"/><text x="1231.4" y="718.8" font-family="Liberation Sans" font-style="italic" font-size="9.6" fill="#151515" opacity="0.8" textLength="7.6" lengthAdjust="spacingAndGlyphs">fx</text><text x="716.7" y="719.6" font-family="Liberation Sans" font-size="10" fill="#101010" textLength="11.4" lengthAdjust="spacingAndGlyphs">4.1</text><text x="728.6" y="718.15" font-family="'Liberation Sans','Noto Sans CJK SC',sans-serif" font-size="10.4" fill="#101010">平</text><text x="814.6" y="719.6" font-family="Liberation Sans" font-size="10" fill="#101010" textLength="39.4" lengthAdjust="spacingAndGlyphs">00093.MT</text><text x="930.6" y="719.6" font-family="Liberation Sans" font-size="10" fill="#101010" textLength="19.6" lengthAdjust="spacingAndGlyphs">0009</text><text x="1048.0" y="719.6" font-family="Liberation Sans" font-size="10" fill="#101010" textLength="59" lengthAdjust="spacingAndGlyphs">00093.MTS [V]</text><text x="1184.0" y="719.6" font-family="Liberation Sans" font-size="10" fill="#101010" textLength="19.6" lengthAdjust="spacingAndGlyphs">0009</text><defs><pattern id="spk" width="23" height="19" patternUnits="userSpaceOnUse"><rect width="23" height="19" fill="#f9f9f9"/><g fill="#a6a6a6"><rect x="2" y="3" width="1" height="1"/><rect x="9" y="1" width="1" height="1"/><rect x="15" y="6" width="1" height="1"/><rect x="5" y="10" width="1" height="1"/><rect x="20" y="12" width="1" height="1"/><rect x="12" y="15" width="1" height="1"/><rect x="18" y="2" width="1" height="1"/><rect x="1" y="16" width="1" height="1"/></g><g fill="#d6d6d6"><rect x="6" y="5" width="1" height="1"/><rect x="13" y="9" width="1" height="1"/><rect x="21" y="7" width="1" height="1"/><rect x="3" y="13" width="1" height="1"/><rect x="16" y="17" width="1" height="1"/><rect x="10" y="12" width="1" height="1"/><rect x="8" y="17" width="1" height="1"/><rect x="19" y="9" width="1" height="1"/><rect x="11" y="4" width="1" height="1"/></g></pattern></defs><rect x="289.0" y="742.0" width="22.0" height="53.5" fill="#739dd1"/><rect x="312.0" y="742.0" width="6.0" height="53.5" fill="#739dd1"/><path d="M289 760.3H311M312 760.3H318" stroke="#c3cfde" stroke-width="1.3"/><path d="M289 761.5H311M312 761.5H318" stroke="#566f96" stroke-width="1.1"/><rect x="318.9" y="742" width="971" height="53.5" fill="#fff"/><rect x="318.9" y="742" width="971" height="53.5" fill="url(#spk)"/><rect x="320.2" y="742" width="24.8" height="15.8" fill="#739dd1"/><rect x="329.9" y="745.7" width="10.6" height="9.6" fill="#686868" stroke="#a9a9a6" stroke-width="1"/><text x="331.0" y="753.4" font-family="Liberation Sans" font-style="italic" font-size="9.6" fill="#151515" opacity="0.8" textLength="7.6" lengthAdjust="spacingAndGlyphs">fx</text><path d="M320.1 760.3H352.0" stroke="#c9c9c9" stroke-width="1.2"/><path d="M320.1 761.4H352.0" stroke="#7e7e7e" stroke-width="1.1"/><rect x="353.9" y="742" width="24.8" height="15.8" fill="#739dd1"/><rect x="363.6" y="745.7" width="10.6" height="9.6" fill="#686868" stroke="#a9a9a6" stroke-width="1"/><text x="364.7" y="753.4" font-family="Liberation Sans" font-style="italic" font-size="9.6" fill="#151515" opacity="0.8" textLength="7.6" lengthAdjust="spacingAndGlyphs">fx</text><path d="M353.8 760.3H386.9" stroke="#c9c9c9" stroke-width="1.2"/><path d="M353.8 761.4H386.9" stroke="#7e7e7e" stroke-width="1.1"/><rect x="388.8" y="742" width="24.8" height="15.8" fill="#739dd1"/><rect x="398.5" y="745.7" width="10.6" height="9.6" fill="#686868" stroke="#a9a9a6" stroke-width="1"/><text x="399.6" y="753.4" font-family="Liberation Sans" font-style="italic" font-size="9.6" fill="#151515" opacity="0.8" textLength="7.6" lengthAdjust="spacingAndGlyphs">fx</text><path d="M388.7 760.3H423.0" stroke="#c9c9c9" stroke-width="1.2"/><path d="M388.7 761.4H423.0" stroke="#7e7e7e" stroke-width="1.1"/><rect x="424.9" y="742" width="24.8" height="15.8" fill="#739dd1"/><rect x="434.6" y="745.7" width="10.6" height="9.6" fill="#686868" stroke="#a9a9a6" stroke-width="1"/><text x="435.7" y="753.4" font-family="Liberation Sans" font-style="italic" font-size="9.6" fill="#151515" opacity="0.8" textLength="7.6" lengthAdjust="spacingAndGlyphs">fx</text><path d="M424.8 760.3H457.9" stroke="#c9c9c9" stroke-width="1.2"/><path d="M424.8 761.4H457.9" stroke="#7e7e7e" stroke-width="1.1"/><rect x="459.8" y="742" width="24.8" height="15.8" fill="#739dd1"/><rect x="469.5" y="745.7" width="10.6" height="9.6" fill="#686868" stroke="#a9a9a6" stroke-width="1"/><text x="470.6" y="753.4" font-family="Liberation Sans" font-style="italic" font-size="9.6" fill="#151515" opacity="0.8" textLength="7.6" lengthAdjust="spacingAndGlyphs">fx</text><path d="M459.7 760.3H493.2" stroke="#c9c9c9" stroke-width="1.2"/><path d="M459.7 761.4H493.2" stroke="#7e7e7e" stroke-width="1.1"/><rect x="495.1" y="742" width="24.8" height="15.8" fill="#739dd1"/><rect x="504.8" y="745.7" width="10.6" height="9.6" fill="#686868" stroke="#a9a9a6" stroke-width="1"/><text x="505.9" y="753.4" font-family="Liberation Sans" font-style="italic" font-size="9.6" fill="#151515" opacity="0.8" textLength="7.6" lengthAdjust="spacingAndGlyphs">fx</text><path d="M495.0 760.3H529.0" stroke="#c9c9c9" stroke-width="1.2"/><path d="M495.0 761.4H529.0" stroke="#7e7e7e" stroke-width="1.1"/><rect x="530.9" y="742" width="24.8" height="15.8" fill="#739dd1"/><rect x="540.6" y="745.7" width="10.6" height="9.6" fill="#686868" stroke="#a9a9a6" stroke-width="1"/><text x="541.7" y="753.4" font-family="Liberation Sans" font-style="italic" font-size="9.6" fill="#151515" opacity="0.8" textLength="7.6" lengthAdjust="spacingAndGlyphs">fx</text><path d="M530.8 760.3H565.2" stroke="#c9c9c9" stroke-width="1.2"/><path d="M530.8 761.4H565.2" stroke="#7e7e7e" stroke-width="1.1"/><rect x="567.1" y="742" width="24.8" height="15.8" fill="#739dd1"/><rect x="576.8" y="745.7" width="10.6" height="9.6" fill="#686868" stroke="#a9a9a6" stroke-width="1"/><text x="577.9" y="753.4" font-family="Liberation Sans" font-style="italic" font-size="9.6" fill="#151515" opacity="0.8" textLength="7.6" lengthAdjust="spacingAndGlyphs">fx</text><path d="M567.0 760.3H601.1" stroke="#c9c9c9" stroke-width="1.2"/><path d="M567.0 761.4H601.1" stroke="#7e7e7e" stroke-width="1.1"/><rect x="603.0" y="742" width="24.8" height="15.8" fill="#739dd1"/><rect x="612.7" y="745.7" width="10.6" height="9.6" fill="#686868" stroke="#a9a9a6" stroke-width="1"/><text x="613.8" y="753.4" font-family="Liberation Sans" font-style="italic" font-size="9.6" fill="#151515" opacity="0.8" textLength="7.6" lengthAdjust="spacingAndGlyphs">fx</text><path d="M602.9 760.3H635.4" stroke="#c9c9c9" stroke-width="1.2"/><path d="M602.9 761.4H635.4" stroke="#7e7e7e" stroke-width="1.1"/><rect x="637.3" y="742" width="24.8" height="15.8" fill="#739dd1"/><rect x="647.0" y="745.7" width="10.6" height="9.6" fill="#686868" stroke="#a9a9a6" stroke-width="1"/><text x="648.1" y="753.4" font-family="Liberation Sans" font-style="italic" font-size="9.6" fill="#151515" opacity="0.8" textLength="7.6" lengthAdjust="spacingAndGlyphs">fx</text><path d="M637.2 760.3H671.1" stroke="#c9c9c9" stroke-width="1.2"/><path d="M637.2 761.4H671.1" stroke="#7e7e7e" stroke-width="1.1"/><rect x="673.0" y="742" width="24.8" height="15.8" fill="#739dd1"/><rect x="682.7" y="745.7" width="10.6" height="9.6" fill="#686868" stroke="#a9a9a6" stroke-width="1"/><text x="683.8" y="753.4" font-family="Liberation Sans" font-style="italic" font-size="9.6" fill="#151515" opacity="0.8" textLength="7.6" lengthAdjust="spacingAndGlyphs">fx</text><path d="M672.9 760.3H707.0" stroke="#c9c9c9" stroke-width="1.2"/><path d="M672.9 761.4H707.0" stroke="#7e7e7e" stroke-width="1.1"/><rect x="708.9" y="742" width="24.8" height="15.8" fill="#739dd1"/><rect x="718.6" y="745.7" width="10.6" height="9.6" fill="#686868" stroke="#a9a9a6" stroke-width="1"/><text x="719.7" y="753.4" font-family="Liberation Sans" font-style="italic" font-size="9.6" fill="#151515" opacity="0.8" textLength="7.6" lengthAdjust="spacingAndGlyphs">fx</text><path d="M708.8 760.3H742.9" stroke="#c9c9c9" stroke-width="1.2"/><path d="M708.8 761.4H742.9" stroke="#7e7e7e" stroke-width="1.1"/><rect x="744.8" y="742" width="24.8" height="15.8" fill="#739dd1"/><rect x="754.5" y="745.7" width="10.6" height="9.6" fill="#686868" stroke="#a9a9a6" stroke-width="1"/><text x="755.6" y="753.4" font-family="Liberation Sans" font-style="italic" font-size="9.6" fill="#151515" opacity="0.8" textLength="7.6" lengthAdjust="spacingAndGlyphs">fx</text><path d="M744.7 760.3H778.8" stroke="#c9c9c9" stroke-width="1.2"/><path d="M744.7 761.4H778.8" stroke="#7e7e7e" stroke-width="1.1"/><rect x="780.7" y="742" width="24.8" height="15.8" fill="#739dd1"/><rect x="790.4" y="745.7" width="10.6" height="9.6" fill="#686868" stroke="#a9a9a6" stroke-width="1"/><text x="791.5" y="753.4" font-family="Liberation Sans" font-style="italic" font-size="9.6" fill="#151515" opacity="0.8" textLength="7.6" lengthAdjust="spacingAndGlyphs">fx</text><path d="M780.6 760.3H813.2" stroke="#c9c9c9" stroke-width="1.2"/><path d="M780.6 761.4H813.2" stroke="#7e7e7e" stroke-width="1.1"/><rect x="815.1" y="742" width="24.8" height="15.8" fill="#739dd1"/><rect x="824.8" y="745.7" width="10.6" height="9.6" fill="#686868" stroke="#a9a9a6" stroke-width="1"/><text x="825.9" y="753.4" font-family="Liberation Sans" font-style="italic" font-size="9.6" fill="#151515" opacity="0.8" textLength="7.6" lengthAdjust="spacingAndGlyphs">fx</text><path d="M815.0 760.3H848.5" stroke="#c9c9c9" stroke-width="1.2"/><path d="M815.0 761.4H848.5" stroke="#7e7e7e" stroke-width="1.1"/><rect x="850.4" y="742" width="24.8" height="15.8" fill="#739dd1"/><rect x="860.1" y="745.7" width="10.6" height="9.6" fill="#686868" stroke="#a9a9a6" stroke-width="1"/><text x="861.2" y="753.4" font-family="Liberation Sans" font-style="italic" font-size="9.6" fill="#151515" opacity="0.8" textLength="7.6" lengthAdjust="spacingAndGlyphs">fx</text><path d="M850.3 760.3H884.4" stroke="#c9c9c9" stroke-width="1.2"/><path d="M850.3 761.4H884.4" stroke="#7e7e7e" stroke-width="1.1"/><rect x="886.3" y="742" width="24.8" height="15.8" fill="#739dd1"/><rect x="896.0" y="745.7" width="10.6" height="9.6" fill="#686868" stroke="#a9a9a6" stroke-width="1"/><text x="897.1" y="753.4" font-family="Liberation Sans" font-style="italic" font-size="9.6" fill="#151515" opacity="0.8" textLength="7.6" lengthAdjust="spacingAndGlyphs">fx</text><path d="M886.2 760.3H920.1" stroke="#c9c9c9" stroke-width="1.2"/><path d="M886.2 761.4H920.1" stroke="#7e7e7e" stroke-width="1.1"/><rect x="922.0" y="742" width="24.8" height="15.8" fill="#739dd1"/><rect x="931.7" y="745.7" width="10.6" height="9.6" fill="#686868" stroke="#a9a9a6" stroke-width="1"/><text x="932.8" y="753.4" font-family="Liberation Sans" font-style="italic" font-size="9.6" fill="#151515" opacity="0.8" textLength="7.6" lengthAdjust="spacingAndGlyphs">fx</text><path d="M921.9 760.3H956.0" stroke="#c9c9c9" stroke-width="1.2"/><path d="M921.9 761.4H956.0" stroke="#7e7e7e" stroke-width="1.1"/><rect x="957.9" y="742" width="24.8" height="15.8" fill="#739dd1"/><rect x="967.6" y="745.7" width="10.6" height="9.6" fill="#686868" stroke="#a9a9a6" stroke-width="1"/><text x="968.7" y="753.4" font-family="Liberation Sans" font-style="italic" font-size="9.6" fill="#151515" opacity="0.8" textLength="7.6" lengthAdjust="spacingAndGlyphs">fx</text><path d="M957.8 760.3H990.3" stroke="#c9c9c9" stroke-width="1.2"/><path d="M957.8 761.4H990.3" stroke="#7e7e7e" stroke-width="1.1"/><rect x="992.2" y="742" width="24.8" height="15.8" fill="#739dd1"/><rect x="1001.9" y="745.7" width="10.6" height="9.6" fill="#686868" stroke="#a9a9a6" stroke-width="1"/><text x="1003.0" y="753.4" font-family="Liberation Sans" font-style="italic" font-size="9.6" fill="#151515" opacity="0.8" textLength="7.6" lengthAdjust="spacingAndGlyphs">fx</text><path d="M992.1 760.3H1026.6" stroke="#c9c9c9" stroke-width="1.2"/><path d="M992.1 761.4H1026.6" stroke="#7e7e7e" stroke-width="1.1"/><rect x="1028.5" y="742" width="24.8" height="15.8" fill="#739dd1"/><rect x="1038.2" y="745.7" width="10.6" height="9.6" fill="#686868" stroke="#a9a9a6" stroke-width="1"/><text x="1039.3" y="753.4" font-family="Liberation Sans" font-style="italic" font-size="9.6" fill="#151515" opacity="0.8" textLength="7.6" lengthAdjust="spacingAndGlyphs">fx</text><path d="M1028.4 760.3H1062.1" stroke="#c9c9c9" stroke-width="1.2"/><path d="M1028.4 761.4H1062.1" stroke="#7e7e7e" stroke-width="1.1"/><rect x="1064.0" y="742" width="24.8" height="15.8" fill="#739dd1"/><rect x="1073.7" y="745.7" width="10.6" height="9.6" fill="#686868" stroke="#a9a9a6" stroke-width="1"/><text x="1074.8" y="753.4" font-family="Liberation Sans" font-style="italic" font-size="9.6" fill="#151515" opacity="0.8" textLength="7.6" lengthAdjust="spacingAndGlyphs">fx</text><path d="M1063.9 760.3H1098.0" stroke="#c9c9c9" stroke-width="1.2"/><path d="M1063.9 761.4H1098.0" stroke="#7e7e7e" stroke-width="1.1"/><rect x="1099.9" y="742" width="24.8" height="15.8" fill="#739dd1"/><rect x="1109.6" y="745.7" width="10.6" height="9.6" fill="#686868" stroke="#a9a9a6" stroke-width="1"/><text x="1110.7" y="753.4" font-family="Liberation Sans" font-style="italic" font-size="9.6" fill="#151515" opacity="0.8" textLength="7.6" lengthAdjust="spacingAndGlyphs">fx</text><path d="M1099.8 760.3H1133.7" stroke="#c9c9c9" stroke-width="1.2"/><path d="M1099.8 761.4H1133.7" stroke="#7e7e7e" stroke-width="1.1"/><rect x="1135.6" y="742" width="24.8" height="15.8" fill="#739dd1"/><rect x="1145.3" y="745.7" width="10.6" height="9.6" fill="#686868" stroke="#a9a9a6" stroke-width="1"/><text x="1146.4" y="753.4" font-family="Liberation Sans" font-style="italic" font-size="9.6" fill="#151515" opacity="0.8" textLength="7.6" lengthAdjust="spacingAndGlyphs">fx</text><path d="M1135.5 760.3H1168.0" stroke="#c9c9c9" stroke-width="1.2"/><path d="M1135.5 761.4H1168.0" stroke="#7e7e7e" stroke-width="1.1"/><rect x="1169.9" y="742" width="24.8" height="15.8" fill="#739dd1"/><rect x="1179.6" y="745.7" width="10.6" height="9.6" fill="#686868" stroke="#a9a9a6" stroke-width="1"/><text x="1180.7" y="753.4" font-family="Liberation Sans" font-style="italic" font-size="9.6" fill="#151515" opacity="0.8" textLength="7.6" lengthAdjust="spacingAndGlyphs">fx</text><path d="M1169.8 760.3H1203.9" stroke="#c9c9c9" stroke-width="1.2"/><path d="M1169.8 761.4H1203.9" stroke="#7e7e7e" stroke-width="1.1"/><rect x="1205.8" y="742" width="24.8" height="15.8" fill="#739dd1"/><rect x="1215.5" y="745.7" width="10.6" height="9.6" fill="#686868" stroke="#a9a9a6" stroke-width="1"/><text x="1216.6" y="753.4" font-family="Liberation Sans" font-style="italic" font-size="9.6" fill="#151515" opacity="0.8" textLength="7.6" lengthAdjust="spacingAndGlyphs">fx</text><path d="M1205.7 760.3H1239.8" stroke="#c9c9c9" stroke-width="1.2"/><path d="M1205.7 761.4H1239.8" stroke="#7e7e7e" stroke-width="1.1"/><rect x="1241.7" y="742" width="24.8" height="15.8" fill="#739dd1"/><rect x="1251.4" y="745.7" width="10.6" height="9.6" fill="#686868" stroke="#a9a9a6" stroke-width="1"/><text x="1252.5" y="753.4" font-family="Liberation Sans" font-style="italic" font-size="9.6" fill="#151515" opacity="0.8" textLength="7.6" lengthAdjust="spacingAndGlyphs">fx</text><path d="M1241.6 760.3H1275.1" stroke="#c9c9c9" stroke-width="1.2"/><path d="M1241.6 761.4H1275.1" stroke="#7e7e7e" stroke-width="1.1"/><rect x="1277.0" y="742" width="24.8" height="15.8" fill="#739dd1"/><rect x="1286.7" y="745.7" width="10.6" height="9.6" fill="#686868" stroke="#a9a9a6" stroke-width="1"/><text x="1287.8" y="753.4" font-family="Liberation Sans" font-style="italic" font-size="9.6" fill="#151515" opacity="0.8" textLength="7.6" lengthAdjust="spacingAndGlyphs">fx</text><path d="M1276.9 760.3H1310.4" stroke="#c9c9c9" stroke-width="1.2"/><path d="M1276.9 761.4H1310.4" stroke="#7e7e7e" stroke-width="1.1"/><rect x="887" y="743.6" width="32.4" height="50.6" fill="none" stroke="#d2d2d2" stroke-width="3"/><path d="M318.5 742V795.5" stroke="#2a2a2a" stroke-width="1"/><path d="M319.3 742 h6 l-6 6z" fill="#c8c8c8"/><path d="M325.3 742 l-6 6" stroke="#333" stroke-width="0.9"/><path d="M352.5 742V795.5" stroke="#2a2a2a" stroke-width="1"/><path d="M353.0 742 h6 l-6 6z" fill="#c8c8c8"/><path d="M359.0 742 l-6 6" stroke="#333" stroke-width="0.9"/><path d="M387.5 742V795.5" stroke="#2a2a2a" stroke-width="1"/><path d="M387.9 742 h6 l-6 6z" fill="#c8c8c8"/><path d="M393.9 742 l-6 6" stroke="#333" stroke-width="0.9"/><path d="M423.5 742V795.5" stroke="#2a2a2a" stroke-width="1"/><path d="M418.4 742 h10.4 l-5.2 5.4z" fill="#c4c4c4" stroke="#444" stroke-width="0.7"/><path d="M458.5 742V795.5" stroke="#2a2a2a" stroke-width="1"/><path d="M458.9 742 h6 l-6 6z" fill="#c8c8c8"/><path d="M464.9 742 l-6 6" stroke="#333" stroke-width="0.9"/><path d="M493.5 742V795.5" stroke="#2a2a2a" stroke-width="1"/><path d="M494.2 742 h6 l-6 6z" fill="#c8c8c8"/><path d="M500.2 742 l-6 6" stroke="#333" stroke-width="0.9"/><path d="M529.5 742V795.5" stroke="#2a2a2a" stroke-width="1"/><path d="M524.4 742 h10.4 l-5.2 5.4z" fill="#c4c4c4" stroke="#444" stroke-width="0.7"/><path d="M565.5 742V795.5" stroke="#2a2a2a" stroke-width="1"/><path d="M566.2 742 h6 l-6 6z" fill="#c8c8c8"/><path d="M572.2 742 l-6 6" stroke="#333" stroke-width="0.9"/><path d="M601.5 742V795.5" stroke="#2a2a2a" stroke-width="1"/><path d="M596.5 742 h10.4 l-5.2 5.4z" fill="#c4c4c4" stroke="#444" stroke-width="0.7"/><path d="M635.5 742V795.5" stroke="#2a2a2a" stroke-width="1"/><path d="M636.4 742 h6 l-6 6z" fill="#c8c8c8"/><path d="M642.4 742 l-6 6" stroke="#333" stroke-width="0.9"/><path d="M671.5 742V795.5" stroke="#2a2a2a" stroke-width="1"/><path d="M672.1 742 h6 l-6 6z" fill="#c8c8c8"/><path d="M678.1 742 l-6 6" stroke="#333" stroke-width="0.9"/><path d="M707.5 742V795.5" stroke="#2a2a2a" stroke-width="1"/><path d="M702.4 742 h10.4 l-5.2 5.4z" fill="#c4c4c4" stroke="#444" stroke-width="0.7"/><path d="M743.5 742V795.5" stroke="#2a2a2a" stroke-width="1"/><path d="M743.9 742 h6 l-6 6z" fill="#c8c8c8"/><path d="M749.9 742 l-6 6" stroke="#333" stroke-width="0.9"/><path d="M779.5 742V795.5" stroke="#2a2a2a" stroke-width="1"/><path d="M774.2 742 h10.4 l-5.2 5.4z" fill="#c4c4c4" stroke="#444" stroke-width="0.7"/><path d="M813.5 742V795.5" stroke="#2a2a2a" stroke-width="1"/><path d="M814.2 742 h6 l-6 6z" fill="#c8c8c8"/><path d="M820.2 742 l-6 6" stroke="#333" stroke-width="0.9"/><path d="M848.5 742V795.5" stroke="#2a2a2a" stroke-width="1"/><path d="M849.5 742 h6 l-6 6z" fill="#c8c8c8"/><path d="M855.5 742 l-6 6" stroke="#333" stroke-width="0.9"/><path d="M884.5 742V795.5" stroke="#2a2a2a" stroke-width="1"/><path d="M879.8 742 h10.4 l-5.2 5.4z" fill="#c4c4c4" stroke="#444" stroke-width="0.7"/><path d="M920.5 742V795.5" stroke="#2a2a2a" stroke-width="1"/><path d="M921.1 742 h6 l-6 6z" fill="#c8c8c8"/><path d="M927.1 742 l-6 6" stroke="#333" stroke-width="0.9"/><path d="M956.5 742V795.5" stroke="#2a2a2a" stroke-width="1"/><path d="M951.4 742 h10.4 l-5.2 5.4z" fill="#c4c4c4" stroke="#444" stroke-width="0.7"/><path d="M990.5 742V795.5" stroke="#2a2a2a" stroke-width="1"/><path d="M991.3 742 h6 l-6 6z" fill="#c8c8c8"/><path d="M997.3 742 l-6 6" stroke="#333" stroke-width="0.9"/><path d="M1026.5 742V795.5" stroke="#2a2a2a" stroke-width="1"/><path d="M1027.6 742 h6 l-6 6z" fill="#c8c8c8"/><path d="M1033.6 742 l-6 6" stroke="#333" stroke-width="0.9"/><path d="M1062.5 742V795.5" stroke="#2a2a2a" stroke-width="1"/><path d="M1057.5 742 h10.4 l-5.2 5.4z" fill="#c4c4c4" stroke="#444" stroke-width="0.7"/><path d="M1098.5 742V795.5" stroke="#2a2a2a" stroke-width="1"/><path d="M1099.0 742 h6 l-6 6z" fill="#c8c8c8"/><path d="M1105.0 742 l-6 6" stroke="#333" stroke-width="0.9"/><path d="M1134.5 742V795.5" stroke="#2a2a2a" stroke-width="1"/><path d="M1129.1 742 h10.4 l-5.2 5.4z" fill="#c4c4c4" stroke="#444" stroke-width="0.7"/><path d="M1168.5 742V795.5" stroke="#2a2a2a" stroke-width="1"/><path d="M1169.0 742 h6 l-6 6z" fill="#c8c8c8"/><path d="M1175.0 742 l-6 6" stroke="#333" stroke-width="0.9"/><path d="M1204.5 742V795.5" stroke="#2a2a2a" stroke-width="1"/><path d="M1204.9 742 h6 l-6 6z" fill="#c8c8c8"/><path d="M1210.9 742 l-6 6" stroke="#333" stroke-width="0.9"/><path d="M1240.5 742V795.5" stroke="#2a2a2a" stroke-width="1"/><path d="M1235.2 742 h10.4 l-5.2 5.4z" fill="#c4c4c4" stroke="#444" stroke-width="0.7"/><path d="M1275.5 742V795.5" stroke="#2a2a2a" stroke-width="1"/><path d="M1276.1 742 h6 l-6 6z" fill="#c8c8c8"/><path d="M1282.1 742 l-6 6" stroke="#333" stroke-width="0.9"/><path d="M289 742 h5.4 l-5.4 5.4z M311.2 742 h-5.4 l5.4 5.4z" fill="#c8c8c8"/><path d="M294.4 742 l-5.4 5.4M305.8 742 l5.4 5.4" stroke="#333" stroke-width="0.9"/><rect x="289.0" y="801.0" width="22.0" height="54.0" fill="#739dd1"/><rect x="319.0" y="801.0" width="970.0" height="54.0" fill="#739dd1"/><path d="M289.0 801.0V806.5H290V808H291V807.5H292V807H293V807.5H294V808.5H296V807.5H297V806H298V810.5H299V808H300V806.5H301V807.5H302V808H304V809H306V808.5H307V807.5H308V808.5H311.2V801.0Z" fill="#3a4d69"/><path d="M289.0 828.4V833.5H290V836H291V835.5H292V835H293V833H294V837H295V833.5H296V835.5H298V836H299V837H300V835H301V833.5H302V835.5H303V835H304V833H305V836H306V835H307V834.5H308V837H309V834H311V834.5H311.2V828.4Z" fill="#3a4d69"/><path d="M289.0 823.4H311.2" stroke="#c9d6e6" stroke-width="1.3"/><path d="M289.0 824.6H311.2" stroke="#4f6f9c" stroke-width="0.9"/><path d="M289.0 827.9H311.2" stroke="#5d86bd" stroke-width="0.9"/><path d="M319.3 801.0V813H320.3V814H321.3V811.5H323.3V815.5H324.3V812.5H325.3V810H326.3V815H327.3V813H328.3V815H329.3V821.5H330.3V815.5H331.3V814.5H332.3V813.5H334.3V814H335.3V816H336.3V818.5H337.3V820.5H338.3V814.5H339.3V813.5H340.3V815.5H341.3V814H342.3V816H343.3V815.5H345.3V810H346.3V810.5H347.3V816H348.3V814H349.3V816.5H350.3V818H351.3V821H352.3V822.5H353.3V814.5H354.3V816H356.3V816.5H357.3V812.5H358.3V810.5H359.3V815.5H360.3V815H361.3V813.5H362.3V818.5H363.3V815H366.3V815.5H368.3V815H369.3V816.5H370.3V811H371.3V816.5H372.3V815.5H373.3V814H374.3V814.5H375.3V812.5H376.3V813.5H377.3V812.5H378.3V816.5H379.3V808.5H380.3V809.5H381.3V812H382.3V815H383.3V815.5H384.3V812.5H385.3V814.5H386.3V807.5H387.3V812H388.3V812.5H390.3V807.5H391.3V812H392.3V813.5H393.3V808H394.3V809H395.3V815.5H396.3V810.5H397.3V816H398.3V813.5H399.3V810.5H401.3V812.5H402.3V813H404.3V814H405.3V812.5H406.3V808.5H407.3V815.5H408.3V814H409.3V817.5H410.3V809.5H411.3V814H412.3V821.5H413.3V811.5H414.3V812.5H415.3V811H416.3V808.5H418.3V811.5H419.3V812.5H420.3V812H421.3V809H422.3V808.5H423.3V815H424.3V811H425.3V815.5H426.3V816H427.3V814.5H428.3V811H429.3V814H430.3V814.5H431.3V809H432.3V814H433.3V809.5H434.3V811H435.3V821H436.3V814.5H437.3V815.5H438.3V813.5H439.3V821H440.3V812.5H441.3V819.5H442.3V813H443.3V813.5H444.3V812H445.3V812.5H446.3V815H447.3V817H448.3V820.5H449.3V815H450.3V813H453.3V813.5H454.3V810H455.3V811.5H456.3V812.5H457.3V815H458.3V813.5H459.3V814H460.3V813H462.3V818H463.3V819H464.3V815.5H465.3V816H466.3V813.5H467.3V815.5H468.3V814H469.3V812H470.3V816H471.3V822H472.3V815H473.3V818H474.3V814.5H475.3V815.5H476.3V817.5H477.3V811.5H478.3V815H479.3V814H481.3V815H482.3V813.5H483.3V817.5H484.3V813H485.3V815H486.3V808.5H487.3V814H489.3V815H490.3V811H491.3V814.5H493.3V812.5H494.3V822H495.3V813H496.3V814.5H497.3V809.5H498.3V812.5H499.3V810.5H500.3V814H501.3V813.5H502.3V814H503.3V809.5H504.3V813H507.3V821H508.3V813H509.3V815.5H510.3V821H511.3V813.5H512.3V818H513.3V812.5H514.3V822H515.3V811H516.3V814H517.3V814.5H518.3V821.5H519.3V809H520.3V813H521.3V810H522.3V811.5H523.3V818H524.3V813.5H525.3V813H526.3V818.5H527.3V811H528.3V813.5H529.3V808.5H530.3V814.5H532.3V820.5H533.3V812H534.3V814H535.3V811.5H536.3V815.5H537.3V819H538.3V813H539.3V815.5H540.3V814H541.3V815H542.3V821H543.3V811.5H544.3V814.5H545.3V813.5H546.3V809.5H547.3V813H548.3V814H549.3V814.5H550.3V812.5H551.3V814H552.3V817H553.3V813H554.3V814H555.3V820H556.3V812H557.3V814H558.3V810.5H559.3V821.5H560.3V813H563.3V813.5H564.3V811.5H565.3V814H566.3V810H567.3V818H568.3V813H569.3V809H570.3V811.5H571.3V812H572.3V813.5H573.3V811.5H574.3V813.5H575.3V819H576.3V806.5H577.3V811.5H579.3V812.5H580.3V808.5H581.3V811.5H582.3V813.5H583.3V812.5H584.3V816H585.3V813.5H586.3V812.5H587.3V814.5H588.3V812.5H589.3V814H590.3V817.5H591.3V811.5H592.3V813.5H593.3V812.5H594.3V810.5H595.3V812H597.3V811.5H598.3V807.5H599.3V819H600.3V811.5H601.3V810.5H602.3V809H603.3V808.5H604.3V813H605.3V808.5H606.3V811.5H607.3V813.5H608.3V822H609.3V814.5H610.3V814H611.3V813H612.3V811.5H613.3V809H614.3V817.5H615.3V812H616.3V821.5H617.3V812.5H618.3V810H619.3V815H621.3V813.5H622.3V812.5H623.3V813.5H625.3V809.5H626.3V815.5H627.3V813.5H628.3V811H629.3V813.5H630.3V811.5H631.3V812.5H632.3V811H633.3V814H634.3V813H635.3V812H636.3V808H637.3V812.5H638.3V808.5H639.3V813H640.3V813.5H641.3V811.5H642.3V812H643.3V811H644.3V811.5H645.3V812H646.3V811.5H647.3V811H648.3V813.5H649.3V813H650.3V812H651.3V809.5H652.3V812.5H654.3V811.5H655.3V812H657.3V810.5H658.3V814.5H660.3V821.5H661.3V814H662.3V815H663.3V814H665.3V813H666.3V812.5H667.3V813.5H668.3V811.5H669.3V814.5H670.3V810H671.3V814.5H672.3V809H673.3V814H674.3V812.5H675.3V815H676.3V814.5H677.3V809.5H678.3V813.5H679.3V817.5H680.3V813H681.3V815H682.3V811H683.3V813.5H685.3V810H686.3V811.5H687.3V813H688.3V815.5H689.3V813.5H690.3V822.5H691.3V821H692.3V809.5H693.3V814H694.3V813.5H695.3V814.5H696.3V811.5H697.3V820.5H698.3V814H699.3V812.5H700.3V813.5H701.3V812H702.3V814H703.3V813.5H704.3V809.5H705.3V817H706.3V814.5H707.3V810H708.3V812H709.3V821H710.3V807.5H711.3V814H712.3V813H713.3V811.5H714.3V811H715.3V813H716.3V812.5H717.3V811.5H718.3V812.5H720.3V813.5H721.3V814H722.3V813H723.3V812H724.3V813.5H725.3V818H726.3V813H727.3V812.5H728.3V813.5H729.3V812.5H730.3V821H731.3V813.5H732.3V815H733.3V815.5H735.3V813.5H736.3V808.5H737.3V811H738.3V810.5H739.3V813H740.3V820.5H741.3V813H742.3V813.5H743.3V814.5H744.3V814H745.3V813H746.3V814.5H747.3V814H748.3V812.5H749.3V818.5H750.3V812.5H751.3V812H752.3V812.5H753.3V813H756.3V807.5H757.3V811H758.3V812.5H759.3V810H760.3V812.5H761.3V813H762.3V815.5H764.3V822H765.3V815H766.3V814.5H767.3V811H768.3V813H769.3V814H770.3V809.5H771.3V815H772.3V814.5H773.3V811H775.3V815H776.3V816H777.3V811.5H778.3V817H779.3V816H780.3V821H781.3V816.5H782.3V815H784.3V816.5H785.3V814.5H786.3V816H787.3V815.5H788.3V811H789.3V821.5H790.3V814.5H793.3V821H794.3V813.5H795.3V809H796.3V814H797.3V815H798.3V814H799.3V814.5H800.3V810.5H801.3V809H802.3V814H803.3V813.5H804.3V814H805.3V809.5H806.3V811.5H808.3V808H810.3V811.5H811.3V812.5H812.3V811.5H813.3V813H814.3V822H815.3V812H816.3V813H819.3V814H820.3V809.5H821.3V814.5H824.3V808.5H825.3V814H826.3V815.5H827.3V814.5H828.3V815.5H829.3V816H830.3V811.5H831.3V815H832.3V809.5H833.3V815.5H835.3V814.5H836.3V815H838.3V813.5H839.3V817H840.3V813.5H841.3V814H843.3V813.5H844.3V817H845.3V812.5H846.3V813H847.3V807H848.3V808.5H849.3V809H850.3V811.5H851.3V813.5H852.3V812H853.3V814H854.3V814.5H855.3V810.5H857.3V812.5H860.3V820.5H861.3V815H862.3V813.5H863.3V814H864.3V818.5H865.3V815.5H866.3V814.5H867.3V813H868.3V814.5H869.3V814H870.3V811H871.3V810H872.3V816.5H873.3V809H874.3V807.5H875.3V813.5H876.3V810H877.3V813.5H878.3V812.5H879.3V814H880.3V815.5H881.3V812.5H882.3V819H883.3V814.5H884.3V818.5H885.3V812H886.3V808.5H887.3V819.5H888.3V817H889.3V815H890.3V811H891.3V810H892.3V813H893.3V813.5H894.3V814H895.3V814.5H896.3V812H897.3V813H898.3V810H899.3V812H900.3V812.5H901.3V812H903.3V807.5H904.3V813.5H905.3V807H906.3V812H909.3V811H910.3V807H911.3V812H912.3V813.5H914.3V812.5H915.3V807H916.3V815H917.3V810.5H919.3V811H920.3V810H921.3V811H922.3V811.5H923.3V808H924.3V812H925.3V811.5H926.3V812H928.3V812.5H929.3V811H930.3V813H932.3V809H933.3V813H935.3V810H936.3V811.5H937.3V815.5H939.3V810.5H940.3V814H941.3V815H942.3V814H944.3V810.5H945.3V814.5H946.3V814H947.3V811.5H948.3V813.5H949.3V814.5H950.3V814H951.3V813H953.3V817H954.3V813.5H956.3V812H957.3V811.5H958.3V810.5H959.3V812H960.3V814H961.3V821H962.3V810H963.3V813H964.3V813.5H965.3V814.5H967.3V809H968.3V814H970.3V814.5H971.3V813.5H972.3V813H974.3V814H975.3V812.5H976.3V809H977.3V807.5H978.3V814H979.3V818.5H980.3V812H981.3V815.5H982.3V816H983.3V815H984.3V814.5H986.3V810.5H987.3V814H988.3V814.5H989.3V815.5H990.3V815H991.3V814.5H992.3V813H993.3V815.5H994.3V815H995.3V814.5H996.3V818H997.3V814H999.3V814.5H1000.3V812H1001.3V816H1002.3V815H1003.3V814.5H1005.3V809.5H1006.3V811H1007.3V814H1008.3V812H1009.3V815H1010.3V818H1011.3V813.5H1012.3V813H1014.3V814H1015.3V807.5H1016.3V815H1017.3V814.5H1018.3V816H1019.3V815H1021.3V813H1022.3V812.5H1023.3V814H1024.3V813H1025.3V811H1026.3V813H1027.3V812.5H1028.3V812H1029.3V811H1031.3V813H1032.3V812.5H1033.3V811H1034.3V812H1035.3V808H1036.3V812.5H1037.3V818.5H1038.3V811H1039.3V811.5H1040.3V813H1041.3V812.5H1042.3V820H1043.3V811H1044.3V812.5H1045.3V809H1046.3V807.5H1047.3V813H1048.3V813.5H1049.3V810.5H1050.3V812H1051.3V813H1052.3V812H1053.3V815.5H1054.3V814H1055.3V810H1056.3V812H1058.3V811.5H1059.3V817H1060.3V811H1061.3V812.5H1063.3V815H1064.3V820.5H1065.3V808.5H1066.3V813.5H1067.3V807H1068.3V813H1069.3V813.5H1070.3V808.5H1071.3V814H1072.3V811H1073.3V812H1074.3V813.5H1075.3V816H1076.3V812H1077.3V808H1078.3V817H1079.3V814.5H1080.3V814H1081.3V812H1082.3V814H1083.3V813H1084.3V813.5H1085.3V812H1086.3V809H1087.3V811.5H1088.3V811H1089.3V814H1090.3V811.5H1091.3V812H1092.3V807H1093.3V817H1094.3V811H1095.3V811.5H1096.3V814H1097.3V811.5H1098.3V817H1099.3V810.5H1100.3V812.5H1101.3V819.5H1102.3V812H1103.3V811H1104.3V811.5H1105.3V813H1107.3V812.5H1108.3V811H1110.3V810.5H1111.3V807H1112.3V812.5H1115.3V814H1116.3V812H1119.3V814H1121.3V809.5H1122.3V814.5H1123.3V815.5H1125.3V820.5H1126.3V809H1127.3V813H1129.3V821H1130.3V808H1131.3V809H1132.3V812.5H1133.3V811H1135.3V809H1136.3V813.5H1137.3V807.5H1138.3V808.5H1139.3V822H1140.3V812.5H1141.3V811.5H1142.3V809.5H1143.3V814H1144.3V813.5H1145.3V815H1146.3V821.5H1147.3V814.5H1148.3V811H1149.3V815.5H1150.3V813H1152.3V814H1153.3V815H1154.3V812H1155.3V812.5H1156.3V814H1157.3V808H1158.3V814.5H1159.3V811H1160.3V814.5H1161.3V811.5H1162.3V814H1163.3V809H1164.3V814.5H1165.3V812.5H1166.3V813H1167.3V813.5H1168.3V813H1169.3V812.5H1170.3V813.5H1171.3V807.5H1172.3V811.5H1174.3V811H1175.3V813.5H1178.3V814H1180.3V813H1181.3V812H1182.3V814.5H1183.3V812.5H1184.3V812H1186.3V811.5H1187.3V809H1188.3V812H1189.3V814H1190.3V810.5H1191.3V812.5H1192.3V814.5H1193.3V814H1194.3V815H1195.3V819H1196.3V811H1197.3V812.5H1198.3V813H1199.3V807.5H1200.3V812H1201.3V813.5H1202.3V812H1203.3V813H1204.3V812H1205.3V811H1206.3V812.5H1207.3V818H1208.3V812H1209.3V808.5H1210.3V812H1211.3V808H1212.3V812H1213.3V812.5H1215.3V820H1216.3V813H1217.3V814H1218.3V815H1219.3V809.5H1220.3V813H1221.3V821.5H1222.3V811H1223.3V813H1224.3V812H1225.3V819H1226.3V815.5H1227.3V822H1228.3V813H1229.3V813.5H1230.3V809.5H1231.3V813.5H1232.3V810H1233.3V815H1234.3V818H1235.3V813H1236.3V813.5H1237.3V812H1238.3V808H1239.3V821H1240.3V814H1241.3V813H1242.3V814H1243.3V813.5H1244.3V815.5H1245.3V822.5H1246.3V814.5H1247.3V813.5H1248.3V811H1249.3V821.5H1250.3V815H1251.3V815.5H1252.3V821H1253.3V810H1254.3V812.5H1255.3V812H1256.3V809.5H1257.3V812H1258.3V808.5H1259.3V810H1260.3V813H1261.3V814H1262.3V812.5H1263.3V811H1264.3V813H1265.3V808.5H1266.3V813.5H1267.3V814.5H1268.3V813.5H1270.3V812.5H1271.3V810H1272.3V821H1273.3V818H1274.3V814.5H1275.3V810H1276.3V814H1277.3V812.5H1278.3V814H1279.3V813.5H1280.3V814H1281.3V814.5H1282.3V814H1284.3V822.5H1285.3V814.5H1286.3V817.5H1287.3V815H1288.3V814H1289V801.0Z" fill="#3a4d69"/><path d="M319.3 828.4V843H320.3V844.5H321.3V840H322.3V843H323.3V847H324.3V843.5H325.3V839.5H326.3V844H327.3V845H328.3V843H329.3V848.5H330.3V841.5H333.3V850.5H334.3V842.5H335.3V842H336.3V840.5H337.3V842.5H338.3V842H340.3V841.5H341.3V843H342.3V842.5H343.3V844H344.3V844.5H345.3V843H348.3V844H349.3V843H351.3V842H352.3V837.5H353.3V837H354.3V837.5H355.3V841.5H356.3V843.5H357.3V845H358.3V843.5H359.3V842H360.3V841.5H361.3V843H362.3V839.5H363.3V844.5H364.3V846H365.3V843H367.3V852.5H368.3V840.5H369.3V844H370.3V844.5H371.3V844H372.3V844.5H373.3V842H375.3V839H376.3V843.5H377.3V844H378.3V843H379.3V838.5H380.3V841.5H381.3V844H382.3V853.5H383.3V842.5H384.3V839.5H385.3V851H386.3V843H387.3V845.5H389.3V840H390.3V850H391.3V844H392.3V842H393.3V837.5H394.3V844.5H396.3V842.5H397.3V844H398.3V841.5H399.3V844.5H400.3V841.5H401.3V842.5H403.3V843H404.3V852H405.3V839H406.3V844H407.3V841.5H408.3V838.5H409.3V842H410.3V841.5H412.3V842.5H413.3V836.5H414.3V842H415.3V840.5H416.3V841H417.3V840.5H418.3V849.5H419.3V839.5H420.3V843H421.3V841.5H422.3V839.5H423.3V842H424.3V840.5H425.3V849H426.3V841.5H427.3V844H428.3V842.5H429.3V843.5H430.3V841H431.3V843H432.3V850.5H433.3V839.5H434.3V846.5H435.3V844H436.3V843H437.3V844H438.3V850.5H439.3V843H440.3V843.5H441.3V846H442.3V845.5H443.3V846H444.3V845H445.3V846.5H446.3V845H447.3V839.5H448.3V854H449.3V851H450.3V846H451.3V844.5H452.3V845.5H456.3V840.5H457.3V838.5H458.3V843.5H459.3V848.5H460.3V843.5H461.3V844H463.3V841H464.3V847.5H465.3V843H466.3V845.5H468.3V843H469.3V851H470.3V853H471.3V843H472.3V839H473.3V843.5H474.3V845H475.3V843.5H476.3V845H477.3V844.5H479.3V843H480.3V845H481.3V846H482.3V843.5H483.3V838.5H484.3V840.5H485.3V841H486.3V844.5H487.3V845.5H489.3V845H490.3V846.5H491.3V852H492.3V845H493.3V846H494.3V843H495.3V840.5H496.3V845H497.3V844.5H498.3V842.5H499.3V847.5H500.3V841.5H502.3V843H503.3V837H504.3V843H505.3V842.5H506.3V843H507.3V851.5H508.3V843H509.3V842H510.3V838H511.3V842.5H512.3V840H513.3V844H514.3V843.5H515.3V844H518.3V845H519.3V842H520.3V844H521.3V843H522.3V844.5H523.3V843H524.3V844H525.3V845.5H526.3V846H527.3V845H528.3V843H529.3V844H530.3V847H531.3V845H532.3V842.5H533.3V843H534.3V841.5H535.3V844H536.3V838.5H537.3V850.5H538.3V843.5H539.3V842H540.3V843.5H541.3V841H542.3V841.5H543.3V843H545.3V844H546.3V842.5H547.3V840H548.3V844H549.3V843H550.3V842.5H552.3V850H553.3V848.5H554.3V843.5H555.3V844H556.3V841H557.3V843.5H558.3V848H559.3V844H560.3V839.5H561.3V843H562.3V840H563.3V842H564.3V843.5H565.3V841.5H566.3V842.5H567.3V844.5H568.3V844H569.3V844.5H571.3V840H572.3V841.5H573.3V843.5H574.3V843H575.3V842.5H576.3V843.5H577.3V851.5H578.3V838H579.3V847.5H580.3V843H581.3V837H582.3V841.5H584.3V842.5H586.3V851H587.3V842H588.3V842.5H589.3V835H590.3V840H591.3V841H592.3V842.5H593.3V846.5H594.3V841H595.3V842H596.3V849.5H597.3V844H598.3V838H599.3V844H600.3V845H601.3V839H602.3V841.5H603.3V838H604.3V842.5H605.3V849.5H606.3V843.5H607.3V838H608.3V842.5H609.3V844H610.3V844.5H611.3V841H612.3V843H613.3V842.5H614.3V844.5H616.3V842.5H617.3V844H618.3V854H619.3V844H620.3V843.5H621.3V845H622.3V844.5H623.3V845H624.3V849H625.3V851.5H626.3V844.5H627.3V845H628.3V838.5H629.3V843.5H630.3V842.5H631.3V844H632.3V845.5H633.3V843.5H634.3V845H635.3V850.5H636.3V849.5H637.3V845H638.3V849H639.3V843H640.3V843.5H642.3V842.5H643.3V839.5H644.3V838.5H645.3V842.5H646.3V847H647.3V844H648.3V842H649.3V845H650.3V842.5H651.3V844.5H652.3V840.5H653.3V839H654.3V843H655.3V837.5H656.3V843.5H657.3V841H658.3V837.5H659.3V842H660.3V849H661.3V840.5H662.3V844H663.3V848.5H664.3V843.5H665.3V845H666.3V844.5H667.3V839H668.3V843H669.3V838H670.3V847H671.3V837.5H672.3V841.5H673.3V848.5H674.3V842.5H675.3V836H676.3V846H678.3V842.5H679.3V839H680.3V850H681.3V836.5H682.3V845H683.3V841.5H684.3V843H686.3V837.5H687.3V844.5H688.3V842.5H689.3V844H690.3V845H691.3V839.5H692.3V844H693.3V841.5H694.3V849.5H695.3V843.5H697.3V854.5H698.3V854H699.3V843.5H700.3V841H701.3V842H702.3V849.5H703.3V843H704.3V837.5H705.3V838.5H706.3V841.5H707.3V849.5H708.3V844H709.3V844.5H710.3V842.5H711.3V841H713.3V842H714.3V843.5H715.3V841.5H716.3V842.5H717.3V844.5H718.3V837H719.3V850H720.3V847.5H721.3V841.5H722.3V843H723.3V842H724.3V844H725.3V853H726.3V849.5H727.3V850H728.3V844.5H729.3V846H730.3V843H731.3V848H732.3V844H733.3V845H734.3V844H735.3V849.5H736.3V841.5H737.3V843.5H739.3V842.5H740.3V843H741.3V845.5H742.3V844H743.3V844.5H744.3V841.5H746.3V850H747.3V841H748.3V843H749.3V843.5H750.3V843H751.3V840H752.3V843H753.3V842.5H754.3V841H755.3V841.5H756.3V842H757.3V851H758.3V839H759.3V843.5H760.3V846.5H761.3V842.5H762.3V842H763.3V847.5H764.3V844H765.3V841.5H766.3V843H767.3V841.5H769.3V850H770.3V844H771.3V842.5H772.3V839H773.3V838.5H774.3V843.5H775.3V845.5H776.3V842H777.3V844H778.3V838.5H779.3V849.5H780.3V842H782.3V844H783.3V839H784.3V841.5H785.3V843H787.3V844H788.3V839.5H789.3V841H791.3V839H792.3V841H793.3V841.5H794.3V838.5H795.3V839.5H796.3V844H797.3V843H799.3V840H800.3V838.5H801.3V848H802.3V842.5H803.3V843H804.3V843.5H805.3V845H806.3V839H807.3V845.5H808.3V845H809.3V843H810.3V842H811.3V842.5H812.3V844H813.3V843.5H814.3V844.5H815.3V851H816.3V842.5H817.3V845H818.3V844.5H819.3V838H820.3V845H821.3V844H822.3V844.5H823.3V843H824.3V847H825.3V838H826.3V840.5H827.3V849H828.3V844.5H829.3V844H830.3V843.5H831.3V843H833.3V842H835.3V844H836.3V837.5H837.3V842.5H838.3V841.5H839.3V844H840.3V850.5H841.3V852H842.3V844H843.3V843.5H844.3V844.5H845.3V843.5H846.3V837.5H847.3V845.5H848.3V844H850.3V847.5H851.3V846H852.3V846.5H853.3V840.5H854.3V846H855.3V844.5H856.3V843.5H857.3V844.5H858.3V848.5H859.3V851H860.3V851.5H861.3V845.5H862.3V846H863.3V839.5H864.3V843H865.3V844.5H866.3V847H867.3V844H868.3V849.5H869.3V843.5H870.3V841H871.3V842.5H872.3V845H873.3V843.5H874.3V842H875.3V837.5H876.3V843H877.3V843.5H878.3V837.5H880.3V844H882.3V844.5H883.3V843H884.3V844.5H885.3V843.5H886.3V844.5H887.3V838H888.3V841H889.3V844H890.3V845H891.3V845.5H892.3V845H893.3V850.5H894.3V846H895.3V844.5H896.3V852.5H897.3V847H898.3V841.5H899.3V851.5H900.3V845.5H901.3V843H902.3V844H903.3V844.5H904.3V845H905.3V843H906.3V841.5H907.3V842.5H908.3V850H909.3V843H910.3V844H911.3V853H912.3V843.5H913.3V840.5H914.3V840H915.3V840.5H916.3V844.5H917.3V845H918.3V846H919.3V844.5H920.3V845.5H921.3V844.5H922.3V838.5H923.3V844H924.3V845.5H925.3V845H926.3V843.5H927.3V845.5H929.3V844H930.3V839H931.3V846H932.3V844.5H933.3V843.5H935.3V839H936.3V842.5H937.3V845H938.3V844.5H939.3V844H940.3V842H941.3V844H942.3V843.5H943.3V844H944.3V846H945.3V839H946.3V842.5H947.3V845H948.3V843.5H949.3V842H950.3V837.5H951.3V840H952.3V844.5H953.3V842.5H954.3V842H957.3V851.5H958.3V842.5H959.3V843.5H960.3V843H961.3V843.5H962.3V842H963.3V844.5H964.3V851H965.3V842.5H966.3V843H968.3V842H969.3V845.5H970.3V840H971.3V845.5H972.3V842H973.3V844.5H975.3V844H976.3V844.5H977.3V843H978.3V853.5H979.3V839H980.3V842H981.3V844H982.3V845H983.3V842.5H984.3V843.5H985.3V840.5H986.3V846H987.3V847.5H988.3V838.5H989.3V844H990.3V843.5H991.3V838.5H992.3V839.5H993.3V840.5H994.3V846H995.3V845.5H996.3V844.5H997.3V843.5H998.3V840.5H999.3V842.5H1000.3V843.5H1001.3V842H1003.3V851.5H1004.3V838.5H1005.3V843.5H1008.3V845.5H1009.3V841H1010.3V842H1011.3V841.5H1013.3V842.5H1014.3V840H1015.3V842H1016.3V839H1017.3V838H1018.3V842.5H1019.3V844H1020.3V841.5H1022.3V843.5H1023.3V849H1024.3V842H1025.3V839.5H1026.3V843H1027.3V841.5H1028.3V841H1029.3V843H1030.3V841.5H1031.3V837.5H1032.3V844.5H1033.3V843H1034.3V840.5H1035.3V841.5H1036.3V843H1037.3V842H1038.3V836.5H1039.3V841.5H1040.3V842H1041.3V841.5H1042.3V843.5H1043.3V844.5H1044.3V844H1045.3V845.5H1046.3V850.5H1047.3V844H1048.3V843.5H1050.3V842.5H1051.3V844.5H1052.3V844H1053.3V843.5H1054.3V843H1055.3V843.5H1056.3V849.5H1057.3V843H1059.3V844H1060.3V844.5H1061.3V840H1062.3V842.5H1063.3V844H1064.3V841.5H1065.3V843H1066.3V849H1067.3V844.5H1068.3V843.5H1069.3V842.5H1070.3V844.5H1072.3V843.5H1074.3V845H1075.3V847.5H1076.3V843.5H1077.3V844H1078.3V843.5H1079.3V844H1080.3V852H1081.3V850.5H1082.3V842.5H1083.3V844H1084.3V841H1085.3V843H1086.3V838H1087.3V843H1088.3V842.5H1089.3V843.5H1090.3V846H1091.3V843H1092.3V845H1094.3V851H1095.3V842H1096.3V845.5H1097.3V839H1098.3V842H1099.3V844.5H1100.3V842.5H1101.3V841.5H1102.3V842.5H1104.3V842H1106.3V843H1108.3V840.5H1109.3V842H1110.3V850H1111.3V842H1112.3V840H1113.3V844H1114.3V842.5H1115.3V843.5H1116.3V841.5H1117.3V849H1118.3V841.5H1120.3V842.5H1121.3V843H1122.3V843.5H1123.3V842H1124.3V843.5H1125.3V838.5H1126.3V843.5H1127.3V851H1128.3V842.5H1129.3V841.5H1130.3V842.5H1131.3V852H1132.3V839.5H1133.3V837.5H1134.3V838.5H1135.3V842.5H1136.3V842H1137.3V844H1138.3V842.5H1139.3V843H1140.3V842H1141.3V844H1142.3V852.5H1143.3V844H1144.3V842.5H1145.3V851.5H1146.3V842H1148.3V841.5H1149.3V842.5H1150.3V841H1151.3V843H1152.3V851H1153.3V842H1154.3V843H1155.3V842H1156.3V837.5H1157.3V842.5H1158.3V841.5H1159.3V844H1160.3V844.5H1161.3V845H1162.3V839H1163.3V840H1164.3V842.5H1165.3V842H1166.3V843H1167.3V841.5H1168.3V846.5H1169.3V844.5H1170.3V843H1171.3V850.5H1172.3V844H1174.3V843.5H1176.3V845H1177.3V837.5H1178.3V841H1179.3V842H1180.3V843.5H1181.3V836H1182.3V840.5H1184.3V841.5H1186.3V842.5H1187.3V841H1188.3V842H1189.3V842.5H1190.3V849H1191.3V840H1192.3V842.5H1193.3V845H1194.3V841H1195.3V843.5H1196.3V845H1197.3V843H1198.3V842.5H1199.3V845H1200.3V844.5H1201.3V841.5H1202.3V838.5H1203.3V848.5H1204.3V842.5H1205.3V845H1206.3V842.5H1207.3V844.5H1208.3V845.5H1209.3V842H1210.3V843H1214.3V842.5H1215.3V843H1216.3V842.5H1217.3V841H1219.3V842.5H1220.3V846.5H1221.3V849H1222.3V842H1223.3V850.5H1224.3V840H1225.3V842.5H1226.3V840.5H1227.3V844H1228.3V842H1229.3V843H1231.3V842H1232.3V837.5H1233.3V841.5H1235.3V844.5H1236.3V852H1237.3V853.5H1238.3V844H1239.3V842.5H1240.3V842H1241.3V841.5H1242.3V839H1243.3V842H1244.3V842.5H1245.3V843.5H1246.3V843H1247.3V842.5H1248.3V845H1249.3V846H1250.3V845H1251.3V846H1252.3V844.5H1253.3V845H1255.3V839.5H1256.3V842H1258.3V844.5H1259.3V848.5H1260.3V842H1261.3V841.5H1262.3V840H1263.3V838.5H1264.3V841.5H1265.3V842.5H1267.3V839.5H1268.3V842H1269.3V840.5H1270.3V847.5H1271.3V842H1272.3V842.5H1273.3V843H1274.3V842.5H1275.3V843H1276.3V843.5H1278.3V843H1279.3V844H1281.3V838H1282.3V843.5H1283.3V842.5H1284.3V840.5H1285.3V839.5H1286.3V842.5H1288.3V846.5H1289V828.4Z" fill="#3a4d69"/><path d="M319.3 823.4H1289.0" stroke="#c9d6e6" stroke-width="1.3"/><path d="M319.3 824.6H1289.0" stroke="#4f6f9c" stroke-width="0.9"/><path d="M319.3 827.9H1289.0" stroke="#5d86bd" stroke-width="0.9"/><path d="M319.5 801V855" stroke="#474747" stroke-width="1"/><path d="M320.5 801V855" stroke="#8fa9cc" stroke-width="1" opacity="0.45"/><path d="M363.5 801V855" stroke="#474747" stroke-width="1"/><path d="M364.5 801V855" stroke="#8fa9cc" stroke-width="1" opacity="0.45"/><path d="M387.5 801V855" stroke="#474747" stroke-width="1"/><path d="M388.5 801V855" stroke="#8fa9cc" stroke-width="1" opacity="0.45"/><path d="M391.5 801V855" stroke="#474747" stroke-width="1"/><path d="M392.5 801V855" stroke="#8fa9cc" stroke-width="1" opacity="0.45"/><path d="M412.5 801V855" stroke="#474747" stroke-width="1"/><path d="M413.5 801V855" stroke="#8fa9cc" stroke-width="1" opacity="0.45"/><path d="M428.5 801V855" stroke="#474747" stroke-width="1"/><path d="M429.5 801V855" stroke="#8fa9cc" stroke-width="1" opacity="0.45"/><path d="M436.5 801V855" stroke="#474747" stroke-width="1"/><path d="M437.5 801V855" stroke="#8fa9cc" stroke-width="1" opacity="0.45"/><path d="M477.5 801V855" stroke="#474747" stroke-width="1"/><path d="M478.5 801V855" stroke="#8fa9cc" stroke-width="1" opacity="0.45"/><path d="M489.5 801V855" stroke="#474747" stroke-width="1"/><path d="M490.5 801V855" stroke="#8fa9cc" stroke-width="1" opacity="0.45"/><path d="M515.5 801V855" stroke="#474747" stroke-width="1"/><path d="M516.5 801V855" stroke="#8fa9cc" stroke-width="1" opacity="0.45"/><path d="M542.5 801V855" stroke="#474747" stroke-width="1"/><path d="M543.5 801V855" stroke="#8fa9cc" stroke-width="1" opacity="0.45"/><path d="M559.5 801V855" stroke="#474747" stroke-width="1"/><path d="M560.5 801V855" stroke="#8fa9cc" stroke-width="1" opacity="0.45"/><path d="M570.5 801V855" stroke="#474747" stroke-width="1"/><path d="M571.5 801V855" stroke="#8fa9cc" stroke-width="1" opacity="0.45"/><path d="M590.5 801V855" stroke="#474747" stroke-width="1"/><path d="M591.5 801V855" stroke="#8fa9cc" stroke-width="1" opacity="0.45"/><path d="M642.5 801V855" stroke="#474747" stroke-width="1"/><path d="M643.5 801V855" stroke="#8fa9cc" stroke-width="1" opacity="0.45"/><path d="M748.5 801V855" stroke="#474747" stroke-width="1"/><path d="M749.5 801V855" stroke="#8fa9cc" stroke-width="1" opacity="0.45"/><path d="M784.5 801V855" stroke="#474747" stroke-width="1"/><path d="M785.5 801V855" stroke="#8fa9cc" stroke-width="1" opacity="0.45"/><path d="M857.5 801V855" stroke="#474747" stroke-width="1"/><path d="M858.5 801V855" stroke="#8fa9cc" stroke-width="1" opacity="0.45"/><path d="M902.5 801V855" stroke="#474747" stroke-width="1"/><path d="M903.5 801V855" stroke="#8fa9cc" stroke-width="1" opacity="0.45"/><path d="M954.5 801V855" stroke="#474747" stroke-width="1"/><path d="M955.5 801V855" stroke="#8fa9cc" stroke-width="1" opacity="0.45"/><path d="M983.5 801V855" stroke="#474747" stroke-width="1"/><path d="M984.5 801V855" stroke="#8fa9cc" stroke-width="1" opacity="0.45"/><path d="M1019.5 801V855" stroke="#474747" stroke-width="1"/><path d="M1020.5 801V855" stroke="#8fa9cc" stroke-width="1" opacity="0.45"/><path d="M1125.5 801V855" stroke="#474747" stroke-width="1"/><path d="M1126.5 801V855" stroke="#8fa9cc" stroke-width="1" opacity="0.45"/><path d="M1148.5 801V855" stroke="#474747" stroke-width="1"/><path d="M1149.5 801V855" stroke="#8fa9cc" stroke-width="1" opacity="0.45"/><path d="M1155.5 801V855" stroke="#474747" stroke-width="1"/><path d="M1156.5 801V855" stroke="#8fa9cc" stroke-width="1" opacity="0.45"/><path d="M1206.5 801V855" stroke="#474747" stroke-width="1"/><path d="M1207.5 801V855" stroke="#8fa9cc" stroke-width="1" opacity="0.45"/><path d="M1218.5 801V855" stroke="#474747" stroke-width="1"/><path d="M1219.5 801V855" stroke="#8fa9cc" stroke-width="1" opacity="0.45"/><path d="M1251.5 801V855" stroke="#474747" stroke-width="1"/><path d="M1252.5 801V855" stroke="#8fa9cc" stroke-width="1" opacity="0.45"/><path d="M289 801 h5.4 l-5.4 5.4z" fill="#c8c8c8"/><path d="M294.4 801 l-5.4 5.4" stroke="#333" stroke-width="0.9"/><rect x="329.9" y="805.1" width="10.6" height="9.6" fill="#686868" stroke="#a9a9a6" stroke-width="1"/><text x="331.0" y="812.8" font-family="Liberation Sans" font-style="italic" font-size="9.6" fill="#151515" opacity="0.8" textLength="7.6" lengthAdjust="spacingAndGlyphs">fx</text><rect x="447.9" y="805.1" width="10.6" height="9.6" fill="#686868" stroke="#a9a9a6" stroke-width="1"/><text x="449.0" y="812.8" font-family="Liberation Sans" font-style="italic" font-size="9.6" fill="#151515" opacity="0.8" textLength="7.6" lengthAdjust="spacingAndGlyphs">fx</text><rect x="600.6" y="805.1" width="10.6" height="9.6" fill="#686868" stroke="#a9a9a6" stroke-width="1"/><text x="601.7" y="812.8" font-family="Liberation Sans" font-style="italic" font-size="9.6" fill="#151515" opacity="0.8" textLength="7.6" lengthAdjust="spacingAndGlyphs">fx</text><rect x="653.6" y="805.1" width="10.6" height="9.6" fill="#686868" stroke="#a9a9a6" stroke-width="1"/><text x="654.7" y="812.8" font-family="Liberation Sans" font-style="italic" font-size="9.6" fill="#151515" opacity="0.8" textLength="7.6" lengthAdjust="spacingAndGlyphs">fx</text><rect x="759.5" y="805.1" width="10.6" height="9.6" fill="#686868" stroke="#a9a9a6" stroke-width="1"/><text x="760.6" y="812.8" font-family="Liberation Sans" font-style="italic" font-size="9.6" fill="#151515" opacity="0.8" textLength="7.6" lengthAdjust="spacingAndGlyphs">fx</text><rect x="795.7" y="805.1" width="10.6" height="9.6" fill="#686868" stroke="#a9a9a6" stroke-width="1"/><text x="796.8" y="812.8" font-family="Liberation Sans" font-style="italic" font-size="9.6" fill="#151515" opacity="0.8" textLength="7.6" lengthAdjust="spacingAndGlyphs">fx</text><rect x="868.7" y="805.1" width="10.6" height="9.6" fill="#686868" stroke="#a9a9a6" stroke-width="1"/><text x="869.8" y="812.8" font-family="Liberation Sans" font-style="italic" font-size="9.6" fill="#151515" opacity="0.8" textLength="7.6" lengthAdjust="spacingAndGlyphs">fx</text><rect x="913.1" y="805.1" width="10.6" height="9.6" fill="#686868" stroke="#a9a9a6" stroke-width="1"/><text x="914.2" y="812.8" font-family="Liberation Sans" font-style="italic" font-size="9.6" fill="#151515" opacity="0.8" textLength="7.6" lengthAdjust="spacingAndGlyphs">fx</text><rect x="964.5" y="805.1" width="10.6" height="9.6" fill="#686868" stroke="#a9a9a6" stroke-width="1"/><text x="965.6" y="812.8" font-family="Liberation Sans" font-style="italic" font-size="9.6" fill="#151515" opacity="0.8" textLength="7.6" lengthAdjust="spacingAndGlyphs">fx</text><rect x="993.8" y="805.1" width="10.6" height="9.6" fill="#686868" stroke="#a9a9a6" stroke-width="1"/><text x="994.9" y="812.8" font-family="Liberation Sans" font-style="italic" font-size="9.6" fill="#151515" opacity="0.8" textLength="7.6" lengthAdjust="spacingAndGlyphs">fx</text><rect x="1029.5" y="805.1" width="10.6" height="9.6" fill="#686868" stroke="#a9a9a6" stroke-width="1"/><text x="1030.6" y="812.8" font-family="Liberation Sans" font-style="italic" font-size="9.6" fill="#151515" opacity="0.8" textLength="7.6" lengthAdjust="spacingAndGlyphs">fx</text><rect x="1165.6" y="805.1" width="10.6" height="9.6" fill="#686868" stroke="#a9a9a6" stroke-width="1"/><text x="1166.7" y="812.8" font-family="Liberation Sans" font-style="italic" font-size="9.6" fill="#151515" opacity="0.8" textLength="7.6" lengthAdjust="spacingAndGlyphs">fx</text><rect x="1229.5" y="805.1" width="10.6" height="9.6" fill="#686868" stroke="#a9a9a6" stroke-width="1"/><text x="1230.6" y="812.8" font-family="Liberation Sans" font-style="italic" font-size="9.6" fill="#151515" opacity="0.8" textLength="7.6" lengthAdjust="spacingAndGlyphs">fx</text><rect x="1261.5" y="805.1" width="10.6" height="9.6" fill="#686868" stroke="#a9a9a6" stroke-width="1"/><text x="1262.6" y="812.8" font-family="Liberation Sans" font-style="italic" font-size="9.6" fill="#151515" opacity="0.8" textLength="7.6" lengthAdjust="spacingAndGlyphs">fx</text><path d="M912.5 521V876" stroke="#3f8fe8" stroke-width="1.2"/><path d="M907.8 509.8 h9.400 a0.8 0.8 0 0 1 .8 .8 v6.600 l-5.500 4.800 l-5.500 -4.800 v-6.600 a.8 .8 0 0 1 .8 -.8z" fill="#2d8ceb"/><path d="M912.5 518.600V522" stroke="#123a66" stroke-width="1.200"/></svg>
<svg class="a" style="left:0px;top:0px" width="1289" height="876" viewBox="0 0 1289 876" role="img" aria-label="tool icons"><rect x="10.5" y="467.5" width="27" height="25" rx="3" fill="#141414" stroke="#2d2d2d" stroke-width="1"/><path d="M19 471.6 L31.4 482.7 L23.9 484.1 L19 489.4Z" fill="#2d8ceb"/><rect x="15.6" y="501.6" width="9.4" height="9.8" fill="none" stroke="#b2b2b2" stroke-width="1.3" stroke-dasharray="2.4 1.5"/><path d="M21.4 504.9 h5.6 v-2.6 l5.4 4.2 l-5.4 4.2 v-2.6 h-5.6z" fill="#b2b2b2" stroke="#232323" stroke-width="0.6"/><path d="M35.8 518.2 v-2.8 l-2.8 2.8z" fill="#8c8c8c"/><path d="M22.9 527 h2 v13.6 h-2z M14 533.6 l6.6 -3.9 v2.7 h1.6 v2.4 h-1.6 v2.7z M34 533.6 l-6.6 -3.9 v2.7 h-1.6 v2.4 h1.6 v2.7z" fill="#b2b2b2"/><path d="M35.8 545 v-2.8 l-2.8 2.8z" fill="#8c8c8c"/><g transform="translate(24 561.2) rotate(40)"><rect x="-7.4" y="-4.2" width="14.8" height="8.4" rx="0.8" fill="#b2b2b2"/><path d="M-3.6 0 l1.2 -1 l1.2 1 l1.2 -1 l1.2 1 l1.2 -1 l1.2 1" stroke="#232323" stroke-width="1.2" fill="none"/></g><path d="M14.7 581.2 v13.6 M33.2 581.2 v13.6" stroke="#b2b2b2" stroke-width="1.6"/><path d="M17.4 588 l4.4 -3.2 v2.3 h4.4 v-2.3 l4.4 3.2 l-4.4 3.2 v-2.3 h-4.4 v2.3z" fill="#b2b2b2"/><path d="M36 599.2 v-2.8 l-2.8 2.8z" fill="#8c8c8c"/><g transform="translate(23.6 615.3) rotate(45)"><path d="M-2.9 -10 h5.8 v3.6 h-5.8z M-3.6 -5.4 h7.2 l1.6 5.6 l-5.2 9.6 l-5.2 -9.6z" fill="#b2b2b2"/><path d="M0 9 v-7" stroke="#232323" stroke-width="1"/><circle cx="0" cy="1.6" r="1.1" fill="#232323"/></g><path d="M36 626.4 v-2.8 l-2.8 2.8z" fill="#8c8c8c"/><path d="M20.6 650 c-1.6 -1.4 -3.4 -4.6 -4.6 -6.8 c-.6 -1.2 .8 -2 1.8 -1 l2.6 2.8 l-1.2 -7 c-.2 -1.4 1.6 -1.7 2 -.4 l1.4 5 l.1 -6.7 c0 -1.4 2 -1.4 2.1 0 l.4 6.6 l1.6 -5.6 c.4 -1.3 2.2 -.9 2 .5 l-1 6.6 l2 -3.6 c.7 -1.1 2.2 -.4 1.8 .8 c-1 3 -2 7.400 -4.400 9.200 c-1.800 1 -4.800 1 -6.400 -.4z" fill="#b2b2b2"/><path d="M36 653.4 v-2.8 l-2.8 2.8z" fill="#8c8c8c"/><path d="M17 662 h13.800 v4 h-1.300 l-.5 -1.700 h-3.800 v10 l2 .5 v1.400 h-6.600 v-1.400 l2 -.5 v-10 h-3.800 l-.5 1.700 h-1.300z" fill="#b2b2b2"/><path d="M36 680.4 v-2.8 l-2.8 2.8z" fill="#8c8c8c"/><g stroke="#2d8ceb" fill="none"><path d="M81.200 510.500V520" stroke-width="1.300"/><path d="M75 514.200h5.200M83 512.200h4.800M85 517h3.200M76.800 518.200h3.800" stroke-width="1.500"/><path d="M75.200 508.600L87.400 520.200" stroke-width="1.100"/></g><rect x="79.800" y="507.300" width="2.800" height="3.200" fill="#2d8ceb"/><path d="M109 516.600 v-2.700 a6 6 0 0 1 12 0 v2.700 h-3.700 v-2.700 a2.300 2.300 0 0 0 -4.600 0 v2.700z" fill="#2d8ceb"/><path d="M109 516.600 h3.700 v3.200 h-3.700z M117.300 516.600 h3.700 v3.200 h-3.700z" fill="#1b5a9c"/><rect x="142.200" y="508.200" width="4.200" height="5" fill="#2d8ceb"/><path d="M146.400 515.400 h-3.600 v3.400 h3.600" fill="none" stroke="#2d8ceb" stroke-width="1.200"/><path d="M147.600 508.200 H156.400 L151.800 513.400 L156.200 517.800 L152.200 517 L147.600 521.400Z" fill="#2d8ceb"/><g transform="translate(183.500 514.200) scale(0.84 0.96) translate(-183.500 -514.200)"><path d="M179.75 509.2 h7.5 a1 1 0 0 1 1 1 v4.6 l-4.75 4.4 l-4.75 -4.4 v-4.6 a1 1 0 0 1 1 -1z" fill="#b8b8b8"/></g><g transform="translate(217.2 514.4) scale(1.1)"><path d="M-6.2 -3.2 a3.6 3.6 0 0 0 4.6 3.4 l5.4 5.6 a1.6 1.6 0 0 0 2.3 -2.3 l-5.5 -5.5 a3.6 3.6 0 0 0 -4.4 -4.5 l2.3 2.3 l-0.7 2 l-2 0.7z" fill="#b8b8b8"/></g><rect x="102.8" y="607" width="8.200" height="6" rx="0.500" fill="#b2b2b2"/><path d="M104.1 607.2 v-1.600 a2.700 2.700 0 0 1 4.900 -1.500" fill="none" stroke="#b2b2b2" stroke-width="1.300"/><rect x="106.2" y="609" width="1.400" height="2.400" fill="#262626"/><g fill="none" stroke="#b2b2b2" stroke-width="1.150"><rect x="157.5" y="604.8" width="7.800" height="3.300" rx="0.600"/><rect x="157.5" y="609.6" width="7.800" height="3.300" rx="0.600"/><path d="M165.3 606.1 h3.200 v5.400 h-3.200" stroke-width="1.400"/></g><rect x="102.8" y="632.1" width="8.200" height="6" rx="0.500" fill="#b2b2b2"/><path d="M104.1 632.3 v-1.600 a2.700 2.700 0 0 1 4.900 -1.500" fill="none" stroke="#b2b2b2" stroke-width="1.300"/><rect x="106.2" y="634.1" width="1.400" height="2.400" fill="#262626"/><g fill="none" stroke="#b2b2b2" stroke-width="1.150"><rect x="157.5" y="629.9" width="7.800" height="3.300" rx="0.600"/><rect x="157.5" y="634.7" width="7.800" height="3.300" rx="0.600"/><path d="M165.3 631.2 h3.200 v5.400 h-3.200" stroke-width="1.400"/></g><rect x="102.8" y="657.2" width="8.200" height="6" rx="0.500" fill="#b2b2b2"/><path d="M104.1 657.4 v-1.600 a2.700 2.700 0 0 1 4.900 -1.500" fill="none" stroke="#b2b2b2" stroke-width="1.300"/><rect x="106.2" y="659.2" width="1.400" height="2.400" fill="#262626"/><g fill="none" stroke="#b2b2b2" stroke-width="1.150"><rect x="157.5" y="655" width="7.800" height="3.300" rx="0.600"/><rect x="157.5" y="659.8" width="7.800" height="3.300" rx="0.600"/><path d="M165.3 656.3 h3.200 v5.400 h-3.200" stroke-width="1.400"/></g><rect x="102.8" y="687.5" width="8.200" height="6" rx="0.500" fill="#b2b2b2"/><path d="M104.1 687.7 v-1.600 a2.700 2.700 0 0 1 4.900 -1.500" fill="none" stroke="#b2b2b2" stroke-width="1.300"/><rect x="106.2" y="689.5" width="1.400" height="2.400" fill="#262626"/><g fill="none" stroke="#b2b2b2" stroke-width="1.150"><rect x="157.5" y="680" width="7.800" height="3.300" rx="0.600"/><rect x="157.5" y="684.8" width="7.800" height="3.300" rx="0.600"/><path d="M165.3 681.3 h3.200 v5.400 h-3.200" stroke-width="1.400"/></g><rect x="102.8" y="722" width="8.200" height="6" rx="0.500" fill="#b2b2b2"/><path d="M104.1 722.2 v-1.600 a2.700 2.700 0 0 1 4.900 -1.500" fill="none" stroke="#b2b2b2" stroke-width="1.300"/><rect x="106.2" y="724" width="1.400" height="2.400" fill="#262626"/><g fill="none" stroke="#b2b2b2" stroke-width="1.150"><rect x="157.5" y="715" width="7.800" height="3.300" rx="0.600"/><rect x="157.5" y="719.8" width="7.800" height="3.300" rx="0.600"/><path d="M165.3 716.3 h3.200 v5.400 h-3.200" stroke-width="1.400"/></g><rect x="102.8" y="766.6" width="8.200" height="6" rx="0.500" fill="#b2b2b2"/><path d="M104.1 766.8 v-1.600 a2.700 2.700 0 0 1 4.900 -1.500" fill="none" stroke="#b2b2b2" stroke-width="1.300"/><rect x="106.2" y="768.6" width="1.400" height="2.400" fill="#262626"/><g fill="none" stroke="#b2b2b2" stroke-width="1.150"><rect x="157.5" y="750.2" width="7.800" height="3.300" rx="0.600"/><rect x="157.5" y="755" width="7.800" height="3.300" rx="0.600"/><path d="M165.3 751.5 h3.200 v5.400 h-3.200" stroke-width="1.400"/></g><rect x="102.8" y="825.7" width="8.200" height="6" rx="0.500" fill="#b2b2b2"/><path d="M104.1 825.9 v-1.600 a2.700 2.700 0 0 1 4.900 -1.500" fill="none" stroke="#b2b2b2" stroke-width="1.300"/><rect x="106.2" y="827.7" width="1.400" height="2.400" fill="#262626"/><g fill="none" stroke="#b2b2b2" stroke-width="1.150"><rect x="157.5" y="809.4" width="7.800" height="3.300" rx="0.600"/><rect x="157.5" y="814.2" width="7.800" height="3.300" rx="0.600"/><path d="M165.3 810.7 h3.200 v5.400 h-3.200" stroke-width="1.400"/></g><g fill="none" stroke="#b2b2b2" stroke-width="1.150"><rect x="157.5" y="864" width="7.800" height="3.300" rx="0.600"/><rect x="157.5" y="868.8" width="7.800" height="3.300" rx="0.600"/><path d="M165.3 865.3 h3.200 v5.400 h-3.200" stroke-width="1.400"/></g><path d="M182.8 609.6 c3.400 -5.400 10.200 -5.400 13.600 0 c-3.400 5.400 -10.200 5.400 -13.600 0z" fill="#b2b2b2"/><circle cx="189.6" cy="609.4" r="2.300" fill="#222"/><path d="M182.8 634.7 c3.400 -5.400 10.200 -5.400 13.600 0 c-3.400 5.400 -10.200 5.400 -13.600 0z" fill="#b2b2b2"/><circle cx="189.6" cy="634.5" r="2.300" fill="#222"/><path d="M182.8 684.8 c3.400 -5.400 10.200 -5.400 13.600 0 c-3.400 5.400 -10.200 5.400 -13.600 0z" fill="#b2b2b2"/><circle cx="189.6" cy="684.6" r="2.300" fill="#222"/><path d="M182.8 719.8 c3.400 -5.400 10.200 -5.400 13.600 0 c-3.400 5.400 -10.200 5.400 -13.600 0z" fill="#b2b2b2"/><circle cx="189.6" cy="719.6" r="2.300" fill="#222"/><path d="M182.8 755 c3.400 -5.400 10.200 -5.400 13.600 0 c-3.400 5.400 -10.200 5.400 -13.600 0z" fill="#b2b2b2"/><circle cx="189.6" cy="754.8" r="2.300" fill="#222"/><path d="M182.8 659.8 c3.400 -5.400 10.200 -5.400 13.600 0 c-3.400 5.400 -10.200 5.400 -13.600 0z" fill="#2d8ceb"/><circle cx="189.6" cy="659.6" r="2.300" fill="#1c1c1c"/><path d="M184.1 654.1 l11 11.400" stroke="#1c1c1c" stroke-width="2.600"/><path d="M183.8 653.8 l11.600 12" stroke="#2d8ceb" stroke-width="1.100"/><rect x="241.1" y="806.6" width="4.600" height="8.600" rx="2.300" fill="#b2b2b2"/><path d="M239.8 812 v1.400 a3.600 3.600 0 0 0 7.200 0 v-1.400 M243.4 817 v2.200 M241.2 819.3 h4.400" fill="none" stroke="#b2b2b2" stroke-width="1.100"/><rect x="241.1" y="861.4" width="4.600" height="8.600" rx="2.300" fill="#b2b2b2"/><path d="M239.8 866.8 v1.400 a3.600 3.600 0 0 0 7.200 0 v-1.400 M243.4 871.8 v2.200 M241.2 874.1 h4.400" fill="none" stroke="#b2b2b2" stroke-width="1.100"/></svg>
</body></html>
